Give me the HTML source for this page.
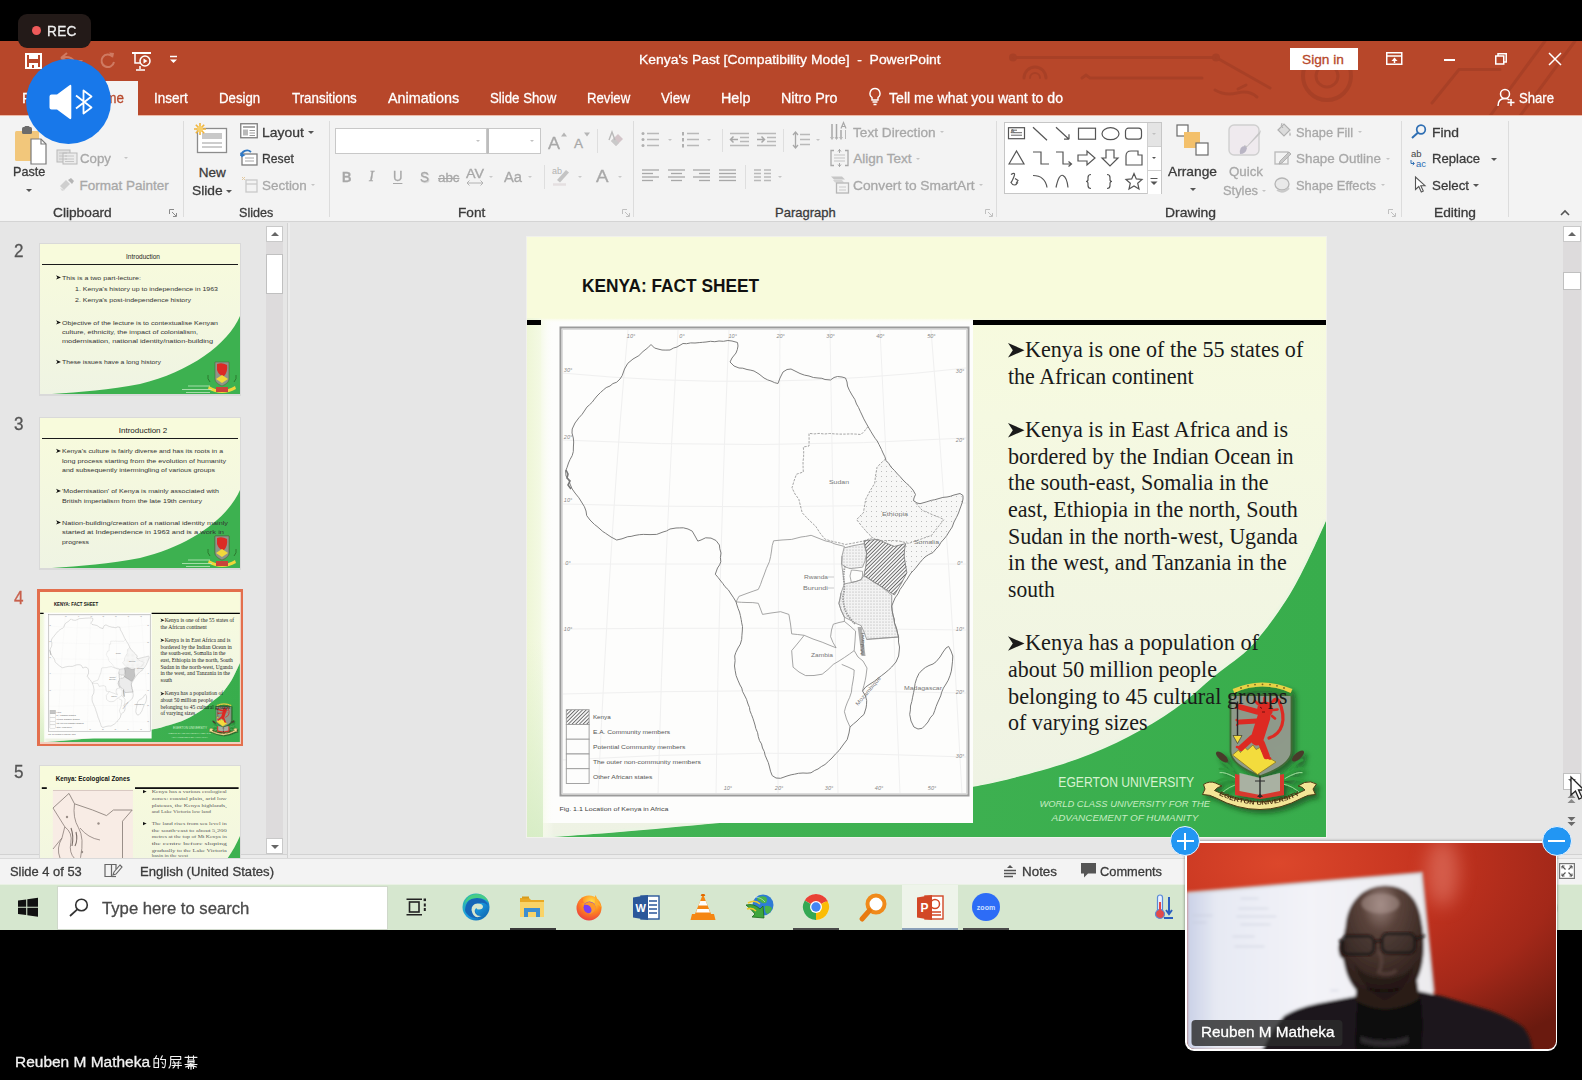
<!DOCTYPE html>
<html><head><meta charset="utf-8"><title>Kenya's Past - PowerPoint</title>
<style>
html,body{margin:0;padding:0;overflow:hidden;}
body{width:1582px;height:1080px;background:#000;position:relative;overflow:hidden;font-family:"Liberation Sans",sans-serif;}
.a{position:absolute;}
.t{position:absolute;white-space:pre;line-height:1;transform-origin:0 50%;-webkit-text-stroke:.3px currentColor;}
svg{position:absolute;overflow:visible;}
</style></head><body>
<div class="a" style="left:0px;top:41px;width:1582px;height:74px;background:#b7472a;"></div>
<div class="a" style="left:0px;top:115px;width:1582px;height:107px;background:#f3f3f3;border-bottom:1px solid #d4d4d4;box-sizing:border-box;"></div>
<div class="a" style="left:0px;top:115px;width:1582px;height:1px;background:#edb9a6;"></div>
<div class="a" style="left:62px;top:115px;width:76px;height:1px;background:#f3f3f3;"></div>
<div class="a" style="left:0px;top:222px;width:1582px;height:637px;background:#e6e6e6;"></div>
<div class="a" style="left:0px;top:854px;width:1582px;height:5px;background:#ebebeb;border-top:1px solid #d2d2d2;box-sizing:border-box;"></div>
<div class="a" style="left:0px;top:859px;width:1582px;height:25px;background:#f3f3f3;"></div>
<div class="a" style="left:0px;top:884px;width:1582px;height:46px;background:#d6e7cf;"></div>
<svg style="left:0;top:41px;overflow:hidden" width="1582" height="74" viewBox="0 41 1582 74"><g fill="none" stroke="#a53f26" stroke-width="3" opacity=".8" stroke-linecap="round"><path d="M1013 57.500H1216L1270 88"/><circle cx="1013" cy="57.500" r="2.500"/><circle cx="1216" cy="57.500" r="2.500"/><path d="M1082 78l4-3 4 3H1202"/><path d="M1024 78a11 11 0 0 1 22 0"/><path d="M1030 78a5 5 0 0 1 10 0" stroke-width="2"/><path d="M1215 90q10 6 22 3t20 4M1238 89l8-4"/><circle cx="1327" cy="76" r="24" stroke-width="4"/><circle cx="1327" cy="76" r="11"/><path d="M1432 103L1459 69.500H1500M1490 116L1545 41M1520 116L1575 41"/></g></svg>
<svg style="left:25px;top:53px" width="17" height="16" viewBox="0 0 17 16"><path d="M1 1h15v14H1z" fill="none" stroke="#fff" stroke-width="2"/><rect x="4" y="1" width="9" height="5" fill="#fff"/><rect x="4" y="10" width="9" height="5" fill="#fff"/><rect x="7" y="12" width="2" height="3" fill="#b7472a"/></svg>
<svg style="left:58px;top:52px" width="26" height="16" viewBox="0 0 26 16"><path d="M3 6 L9 1 M3 6 L10 9 M3 6 Q12 3 17 10" fill="none" stroke="#cf7a62" stroke-width="2"/><path d="M20 8h5l-2.500 3z" fill="#cf7a62"/></svg>
<svg style="left:99px;top:51px" width="18" height="18" viewBox="0 0 18 18"><path d="M13.500 5.500A6.300 6.300 0 1 0 15 11" fill="none" stroke="#cf7a62" stroke-width="2"/><path d="M10 1.500l5 .5-1 5z" fill="#cf7a62"/></svg>
<svg style="left:131px;top:52px" width="22" height="20" viewBox="0 0 22 20"><path d="M1 1h19" stroke="#fff" stroke-width="2"/><path d="M4 2v9h5" fill="none" stroke="#fff" stroke-width="1.500"/><circle cx="14" cy="9" r="5" fill="none" stroke="#fff" stroke-width="1.500"/><path d="M12.500 6.500l4 2.500-4 2.500z" fill="#fff"/><path d="M9 14v3M5 18h9" stroke="#fff" stroke-width="1.500"/></svg>
<svg style="left:169px;top:55px" width="9" height="9" viewBox="0 0 9 9"><path d="M1 1.500h7" stroke="#fff" stroke-width="1.500"/><path d="M1 4.500h7l-3.500 3.500z" fill="#fff"/></svg>
<span class="t" style="left:639.0px;top:52.8px;font-size:13.7px;color:#fff;font-family:'Liberation Sans',sans-serif;transform:scaleX(1.0158);">Kenya's Past [Compatibility Mode]  -  PowerPoint</span>
<div class="a" style="left:1290px;top:48px;width:68px;height:22px;background:#fff;"></div>
<span class="t" style="left:1302.0px;top:52.8px;font-size:13.7px;color:#b7472a;font-family:'Liberation Sans',sans-serif;">Sign in</span>
<svg style="left:1386px;top:52px" width="17" height="13" viewBox="0 0 17 13"><rect x=".75" y=".75" width="15" height="11.500" fill="none" stroke="#fff" stroke-width="1.500"/><path d="M1 4h15" stroke="#fff" stroke-width="1.500"/><path d="M8.500 5.500l3 3.500h-6z" fill="#fff"/><path d="M8.500 8v3" stroke="#fff" stroke-width="1.500"/></svg>
<div class="a" style="left:1444px;top:59px;width:11px;height:1.5px;background:#fff;"></div>
<svg style="left:1495px;top:53px" width="12" height="12" viewBox="0 0 12 12"><rect x=".75" y="3" width="8" height="8" fill="none" stroke="#fff" stroke-width="1.500"/><path d="M3 3V.75h8.250V9H9" fill="none" stroke="#fff" stroke-width="1.500"/></svg>
<svg style="left:1548px;top:52px" width="14" height="14" viewBox="0 0 14 14"><path d="M1 1l12 12M13 1L1 13" stroke="#fff" stroke-width="1.500"/></svg>
<span class="t" style="left:22.0px;top:90.2px;font-size:15px;color:#fff;font-family:'Liberation Sans',sans-serif;transform:scaleX(0.9929);">File</span>
<div class="a" style="left:62px;top:81px;width:76px;height:34px;background:#f3f3f3;"></div>
<span class="t" style="left:88.0px;top:90.2px;font-size:15px;color:#b7472a;font-family:'Liberation Sans',sans-serif;transform:scaleX(0.8997);">Home</span>
<span class="t" style="left:153.7px;top:90.2px;font-size:15px;color:#fff;font-family:'Liberation Sans',sans-serif;transform:scaleX(0.9010);">Insert</span>
<span class="t" style="left:219.4px;top:90.2px;font-size:15px;color:#fff;font-family:'Liberation Sans',sans-serif;transform:scaleX(0.8802);">Design</span>
<span class="t" style="left:292.1px;top:90.2px;font-size:15px;color:#fff;font-family:'Liberation Sans',sans-serif;transform:scaleX(0.8900);">Transitions</span>
<span class="t" style="left:387.6px;top:90.2px;font-size:15px;color:#fff;font-family:'Liberation Sans',sans-serif;transform:scaleX(0.9582);">Animations</span>
<span class="t" style="left:489.7px;top:90.2px;font-size:15px;color:#fff;font-family:'Liberation Sans',sans-serif;transform:scaleX(0.8834);">Slide Show</span>
<span class="t" style="left:587.3px;top:90.2px;font-size:15px;color:#fff;font-family:'Liberation Sans',sans-serif;transform:scaleX(0.8783);">Review</span>
<span class="t" style="left:661.0px;top:90.2px;font-size:15px;color:#fff;font-family:'Liberation Sans',sans-serif;transform:scaleX(0.8994);">View</span>
<span class="t" style="left:721.0px;top:90.2px;font-size:15px;color:#fff;font-family:'Liberation Sans',sans-serif;transform:scaleX(0.9562);">Help</span>
<span class="t" style="left:781.0px;top:90.2px;font-size:15px;color:#fff;font-family:'Liberation Sans',sans-serif;transform:scaleX(0.9547);">Nitro Pro</span>
<svg style="left:868px;top:87px" width="14" height="20" viewBox="0 0 14 20"><path d="M7 1.500a5 5 0 0 1 3 9v2.500h-6v-2.500a5 5 0 0 1 3-9z" fill="none" stroke="#fff" stroke-width="1.400"/><path d="M4.500 15h5M5.500 17.500h3" stroke="#fff" stroke-width="1.400"/></svg>
<span class="t" style="left:889.0px;top:90.2px;font-size:15px;color:#fff;font-family:'Liberation Sans',sans-serif;transform:scaleX(0.9400);">Tell me what you want to do</span>
<svg style="left:1497px;top:88px" width="19" height="19" viewBox="0 0 19 19"><circle cx="8" cy="6" r="4.500" fill="none" stroke="#fff" stroke-width="1.500"/><path d="M1 18c0-5 3-7.500 7-7.500 2 0 3.500.7 4.500 1.500" fill="none" stroke="#fff" stroke-width="1.500"/><path d="M14 11v7M10.500 14.500h7" stroke="#fff" stroke-width="1.500"/></svg>
<span class="t" style="left:1519.0px;top:90.2px;font-size:15px;color:#fff;font-family:'Liberation Sans',sans-serif;transform:scaleX(0.8744);">Share</span>
<svg style="left:14px;top:126px" width="34" height="40" viewBox="0 0 34 40"><rect x="1" y="5" width="24" height="30" rx="1.500" fill="#f2c77b"/><rect x="8" y="1" width="10" height="7" rx="1.500" fill="#6b6b6b"/><rect x="10.500" y="0" width="5" height="3" rx="1" fill="#6b6b6b"/><path d="M17 13h10l5 5v20H17z" fill="#fff" stroke="#7a7a7a" stroke-width="1.200"/><path d="M27 13v5h5" fill="none" stroke="#7a7a7a" stroke-width="1.200"/></svg>
<span class="t" style="left:13.3px;top:165.4px;font-size:13.5px;color:#3b3b3b;font-family:'Liberation Sans',sans-serif;transform:scaleX(0.9356);">Paste</span>
<div class="a" style="left:25.5px;top:189px;border-left:3px solid transparent;border-right:3px solid transparent;border-top:3px solid #555;"></div>
<svg style="left:56px;top:149px" width="24" height="16" viewBox="0 0 24 16"><rect x="1" y="1" width="13" height="12" fill="#e2e2e2" stroke="#b9b9b9"/><rect x="7" y="4" width="14" height="11" fill="#ececec" stroke="#b9b9b9"/><path d="M3 4h8M3 7h8M3 10h8M9 7h9M9 10h9M9 12.500h9" stroke="#bdbdbd" stroke-width=".8"/></svg>
<span class="t" style="left:80.0px;top:152.4px;font-size:13.5px;color:#a8a8a8;font-family:'Liberation Sans',sans-serif;transform:scaleX(0.9836);">Copy</span>
<div class="a" style="left:123.5px;top:157px;border-left:2.5px solid transparent;border-right:2.5px solid transparent;border-top:2.5px solid #c4c4c4;"></div>
<svg style="left:58px;top:177px" width="18" height="16" viewBox="0 0 18 16"><path d="M2 9l6-6 4 4-6 6z" fill="#cfcfcf"/><path d="M10 3l3-2 3 3-2 3z" fill="#b5b5b5"/><path d="M2 11l2 3 3-1" fill="#d9d9d9"/></svg>
<span class="t" style="left:79.5px;top:178.9px;font-size:13.5px;color:#a8a8a8;font-family:'Liberation Sans',sans-serif;">Format Painter</span>
<span class="t" style="left:52.6px;top:206.1px;font-size:13px;color:#3b3b3b;font-family:'Liberation Sans',sans-serif;transform:scaleX(1.0549);">Clipboard</span>
<svg style="left:169px;top:209px" width="8" height="8" viewBox="0 0 8 8"><path d="M.5 5V.5H5" fill="none" stroke="#8a8a8a" stroke-width="1"/><path d="M3 3l4 4M7.500 4v3.500H4" fill="none" stroke="#8a8a8a" stroke-width="1"/></svg>
<div class="a" style="left:183px;top:121px;width:1px;height:96px;background:#dcdcdc;"></div>
<svg style="left:193px;top:122px" width="36" height="34" viewBox="0 0 36 34"><rect x="4.500" y="6.500" width="29" height="24" fill="#fff" stroke="#8c8c8c" stroke-width="1.300"/><rect x="9" y="11" width="20" height="6" fill="#c9c9c9"/><path d="M9 21h20M9 25h20" stroke="#bdbdbd" stroke-width="1.300"/><g stroke="#f0b43c" stroke-width="1.600"><path d="M7 1v12M1 7h12M2.800 2.800l8.400 8.400M11.200 2.800l-8.400 8.400"/></g><circle cx="7" cy="7" r="3" fill="#f7cf6b"/></svg>
<span class="t" style="left:198.8px;top:165.9px;font-size:13.5px;color:#3b3b3b;font-family:'Liberation Sans',sans-serif;">New</span>
<span class="t" style="left:192.3px;top:183.9px;font-size:13.5px;color:#3b3b3b;font-family:'Liberation Sans',sans-serif;transform:scaleX(1.0226);">Slide</span>
<div class="a" style="left:225.5px;top:190px;border-left:3px solid transparent;border-right:3px solid transparent;border-top:3px solid #555;"></div>
<svg style="left:240px;top:123px" width="18" height="16" viewBox="0 0 18 16"><rect x=".75" y=".75" width="16.500" height="14" fill="#fff" stroke="#7d7d7d" stroke-width="1.300"/><path d="M3 4h12" stroke="#8d8d8d" stroke-width="1.500"/><rect x="3" y="6.500" width="5" height="6" fill="#b9b9b9"/><path d="M9.500 7.500h5.500M9.500 10h5.500M9.500 12.500h5.500" stroke="#9a9a9a" stroke-width="1"/></svg>
<span class="t" style="left:262.2px;top:125.9px;font-size:13.5px;color:#3b3b3b;font-family:'Liberation Sans',sans-serif;transform:scaleX(1.0312);">Layout</span>
<div class="a" style="left:307.5px;top:131px;border-left:3px solid transparent;border-right:3px solid transparent;border-top:3px solid #555;"></div>
<svg style="left:240px;top:149px" width="18" height="17" viewBox="0 0 18 17"><rect x="2" y="5" width="15" height="11" fill="#fff" stroke="#7d7d7d" stroke-width="1.300"/><path d="M5 9h9M5 12h9" stroke="#a5a5a5" stroke-width="1"/><path d="M1 7 A6 6 0 0 1 11 3" fill="none" stroke="#2f78c4" stroke-width="1.800"/><path d="M0 3.500l1.500 5 4-2.500z" fill="#2f78c4"/></svg>
<span class="t" style="left:262.2px;top:152.4px;font-size:13.5px;color:#3b3b3b;font-family:'Liberation Sans',sans-serif;transform:scaleX(0.9017);">Reset</span>
<svg style="left:241px;top:176px" width="18" height="17" viewBox="0 0 18 17"><rect x="5" y="4" width="11" height="12" fill="none" stroke="#c9c9c9" stroke-width="1.300"/><path d="M5 8h11" stroke="#c9c9c9" stroke-width="1.300"/><path d="M1 1l3 3M1 4l3-3" stroke="#e2c9a0" stroke-width="1"/></svg>
<span class="t" style="left:262.2px;top:178.9px;font-size:13.5px;color:#a8a8a8;font-family:'Liberation Sans',sans-serif;transform:scaleX(0.9949);">Section</span>
<div class="a" style="left:310.5px;top:184px;border-left:2.5px solid transparent;border-right:2.5px solid transparent;border-top:2.5px solid #c4c4c4;"></div>
<span class="t" style="left:238.8px;top:206.1px;font-size:13px;color:#3b3b3b;font-family:'Liberation Sans',sans-serif;transform:scaleX(0.9659);">Slides</span>
<div class="a" style="left:329px;top:121px;width:1px;height:96px;background:#dcdcdc;"></div>
<div class="a" style="left:335px;top:128px;width:152px;height:26px;background:#fff;border:1px solid #c8c8c8;box-sizing:border-box;"></div>
<div class="a" style="left:487px;top:128px;width:54px;height:26px;background:#fff;border:1px solid #c8c8c8;box-sizing:border-box;border-left:2px solid #bdbdbd;"></div>
<div class="a" style="left:476.0px;top:140px;border-left:2.5px solid transparent;border-right:2.5px solid transparent;border-top:2.5px solid #c2c2c2;"></div>
<div class="a" style="left:529.5px;top:140px;border-left:2.5px solid transparent;border-right:2.5px solid transparent;border-top:2.5px solid #c2c2c2;"></div>
<span class="t" style="left:548.0px;top:134.7px;font-size:17px;color:#a8a8a8;font-family:'Liberation Sans',sans-serif;transform:scaleX(1.0582);">A</span>
<svg style="left:561px;top:132px" width="6" height="5" viewBox="0 0 6 5"><path d="M0 4.500l3-4 3 4z" fill="#b5b5b5"/></svg>
<span class="t" style="left:574.0px;top:137.4px;font-size:13.5px;color:#a8a8a8;font-family:'Liberation Sans',sans-serif;">A</span>
<svg style="left:584px;top:132px" width="6" height="5" viewBox="0 0 6 5"><path d="M0 .5l3 4 3-4z" fill="#b5b5b5"/></svg>
<div class="a" style="left:597px;top:129px;width:1px;height:24px;background:#dedede;"></div>
<svg style="left:607px;top:131px" width="18" height="20" viewBox="0 0 18 20"><path d="M4 10l7-7 5 5-7 7z" fill="#d3c5c9"/><path d="M4 10l3-3 5 5-3 3z" fill="#c9c9c9"/><path d="M2 9l3-8 3 8" fill="none" stroke="#b9b9b9" stroke-width="1.400"/></svg>
<span class="t" style="left:341.5px;top:169.7px;font-size:14px;color:#a8a8a8;font-family:'Liberation Sans',sans-serif;font-weight:bold;transform:scaleX(0.9396);">B</span>
<span class="t" style="left:369.0px;top:169.8px;font-size:14px;color:#a8a8a8;font-family:'Liberation Serif',serif;font-style:italic;transform:scaleX(1.0724);">I</span>
<span class="t" style="left:392.5px;top:169.2px;font-size:14px;color:#a8a8a8;font-family:'Liberation Sans',sans-serif;transform:scaleX(0.9396);border-bottom:1px solid #a8a8a8;padding-bottom:0px;">U</span>
<span class="t" style="left:419.5px;top:169.2px;font-size:15px;color:#a8a8a8;font-family:'Liberation Sans',sans-serif;transform:scaleX(0.8995);text-shadow:1px 1px 1px #cfcfcf;">S</span>
<span class="t" style="left:438.0px;top:171.6px;font-size:12px;color:#a8a8a8;font-family:'Liberation Sans',sans-serif;transform:scaleX(1.1112);text-decoration:line-through;">abc</span>
<span class="t" style="left:466.0px;top:168.1px;font-size:12px;color:#a8a8a8;font-family:'Liberation Sans',sans-serif;transform:scaleX(1.1906);">AV</span>
<svg style="left:466px;top:180px" width="18" height="6" viewBox="0 0 18 6"><path d="M1 3h16M3.500 .5L1 3l2.500 2.500M14.500 .5L17 3l-2.500 2.500" fill="none" stroke="#b2b2b2" stroke-width="1"/></svg>
<div class="a" style="left:489.0px;top:176px;border-left:2.5px solid transparent;border-right:2.5px solid transparent;border-top:2.5px solid #c9c9c9;"></div>
<span class="t" style="left:504.0px;top:169.7px;font-size:14px;color:#a8a8a8;font-family:'Liberation Sans',sans-serif;transform:scaleX(1.0511);">Aa</span>
<div class="a" style="left:527.5px;top:176px;border-left:2.5px solid transparent;border-right:2.5px solid transparent;border-top:2.5px solid #c9c9c9;"></div>
<div class="a" style="left:544px;top:165px;width:1px;height:24px;background:#dedede;"></div>
<svg style="left:552px;top:166px" width="20" height="20" viewBox="0 0 20 20"><text x="0" y="8" font-size="9" fill="#b2b2b2" font-family="Liberation Sans">ab</text><path d="M5 14l9-10 3 2.500-9 10z" fill="#c4c4c4"/><path d="M1 18.500h13" stroke="#e4dfe0" stroke-width="2.500"/></svg>
<div class="a" style="left:578.0px;top:176px;border-left:2.5px solid transparent;border-right:2.5px solid transparent;border-top:2.5px solid #c9c9c9;"></div>
<span class="t" style="left:595.5px;top:168.2px;font-size:17px;color:#a8a8a8;font-family:'Liberation Sans',sans-serif;transform:scaleX(1.1023);">A</span>
<div class="a" style="left:617.5px;top:176px;border-left:2.5px solid transparent;border-right:2.5px solid transparent;border-top:2.5px solid #c9c9c9;"></div>
<span class="t" style="left:457.8px;top:206.1px;font-size:13px;color:#3b3b3b;font-family:'Liberation Sans',sans-serif;transform:scaleX(1.0495);">Font</span>
<svg style="left:621.5px;top:209px" width="8" height="8" viewBox="0 0 8 8"><path d="M.5 5V.5H5" fill="none" stroke="#c0c0c0" stroke-width="1"/><path d="M3 3l4 4M7.500 4v3.500H4" fill="none" stroke="#c0c0c0" stroke-width="1"/></svg>
<div class="a" style="left:633px;top:121px;width:1px;height:96px;background:#dcdcdc;"></div>
<svg style="left:641px;top:131px" width="19" height="17" viewBox="0 0 19 17"><g fill="#b0b0b0"><circle cx="2" cy="2.500" r="1.500"/><circle cx="2" cy="8.500" r="1.500"/><circle cx="2" cy="14.500" r="1.500"/></g><path d="M6 2.500h12M6 8.500h12M6 14.500h12" stroke="#b9b9b9" stroke-width="1.300"/></svg>
<div class="a" style="left:667.5px;top:139px;border-left:2.5px solid transparent;border-right:2.5px solid transparent;border-top:2.5px solid #c4c4c4;"></div>
<svg style="left:681px;top:131px" width="19" height="17" viewBox="0 0 19 17"><g fill="#b0b0b0"><rect x="1" y="1" width="2" height="3.500"/><rect x="1" y="7" width="2" height="3.500"/><rect x="1" y="13" width="2" height="3.500"/></g><path d="M6 2.500h12M6 8.500h12M6 14.500h12" stroke="#b9b9b9" stroke-width="1.300"/></svg>
<div class="a" style="left:707.0px;top:139px;border-left:2.5px solid transparent;border-right:2.5px solid transparent;border-top:2.5px solid #c4c4c4;"></div>
<div class="a" style="left:722px;top:129px;width:1px;height:23px;background:#dedede;"></div>
<svg style="left:729px;top:132px" width="21" height="16" viewBox="0 0 21 16"><path d="M1 1.500h19M11 5.500h9M11 9.500h9M1 13.500h19" stroke="#b9b9b9" stroke-width="1.300"/><path d="M9 7.500H2M4.500 4.500l-3 3 3 3" fill="none" stroke="#a8a8a8" stroke-width="1.500"/></svg>
<svg style="left:756px;top:132px" width="21" height="16" viewBox="0 0 21 16"><path d="M1 1.500h19M11 5.500h9M11 9.500h9M1 13.500h19" stroke="#b9b9b9" stroke-width="1.300"/><path d="M1 7.500h7M5.500 4.500l3 3-3 3" fill="none" stroke="#a8a8a8" stroke-width="1.500"/></svg>
<div class="a" style="left:783px;top:129px;width:1px;height:23px;background:#dedede;"></div>
<svg style="left:792px;top:131px" width="19" height="19" viewBox="0 0 19 19"><path d="M8 3.500h10M8 8.500h10M8 13.500h10" stroke="#b9b9b9" stroke-width="1.300"/><path d="M3.500 1v16M1 4l2.500-3 2.500 3M1 14l2.500 3 2.500-3" fill="none" stroke="#a8a8a8" stroke-width="1.300"/></svg>
<div class="a" style="left:816.0px;top:139px;border-left:2.5px solid transparent;border-right:2.5px solid transparent;border-top:2.5px solid #c4c4c4;"></div>
<svg style="left:642px;top:169px" width="17" height="16.0" viewBox="0 0 17 16.0"><path d="M0 1.0h17" stroke="#a8a8a8" stroke-width="1.300"/><path d="M0 4.5h11" stroke="#a8a8a8" stroke-width="1.300"/><path d="M0 8.0h17" stroke="#a8a8a8" stroke-width="1.300"/><path d="M0 11.5h11" stroke="#a8a8a8" stroke-width="1.300"/></svg>
<svg style="left:667.5px;top:169px" width="17" height="16.0" viewBox="0 0 17 16.0"><path d="M0 1.0h17" stroke="#a8a8a8" stroke-width="1.300"/><path d="M3 4.5h11" stroke="#a8a8a8" stroke-width="1.300"/><path d="M0 8.0h17" stroke="#a8a8a8" stroke-width="1.300"/><path d="M3 11.5h11" stroke="#a8a8a8" stroke-width="1.300"/></svg>
<svg style="left:693px;top:169px" width="17" height="16.0" viewBox="0 0 17 16.0"><path d="M0 1.0h17" stroke="#a8a8a8" stroke-width="1.300"/><path d="M6 4.5h11" stroke="#a8a8a8" stroke-width="1.300"/><path d="M0 8.0h17" stroke="#a8a8a8" stroke-width="1.300"/><path d="M6 11.5h11" stroke="#a8a8a8" stroke-width="1.300"/></svg>
<svg style="left:718.5px;top:169px" width="17" height="16.0" viewBox="0 0 17 16.0"><path d="M0 1.0h17" stroke="#a8a8a8" stroke-width="1.300"/><path d="M0 4.5h17" stroke="#a8a8a8" stroke-width="1.300"/><path d="M0 8.0h17" stroke="#a8a8a8" stroke-width="1.300"/><path d="M0 11.5h17" stroke="#a8a8a8" stroke-width="1.300"/></svg>
<div class="a" style="left:745px;top:165px;width:1px;height:24px;background:#dedede;"></div>
<svg style="left:754px;top:169px" width="18" height="15" viewBox="0 0 18 15"><path d="M0 1h7M0 4.500h7M0 8h7M0 11.500h7M10 1h7M10 4.500h7M10 8h7M10 11.500h7" stroke="#b9b9b9" stroke-width="1.300"/></svg>
<div class="a" style="left:777.5px;top:176px;border-left:2.5px solid transparent;border-right:2.5px solid transparent;border-top:2.5px solid #c4c4c4;"></div>
<svg style="left:830px;top:122px" width="19" height="20" viewBox="0 0 19 20"><path d="M2 2v15M6.500 2v15M11 8v9" stroke="#a8a8a8" stroke-width="1.500"/><path d="M11 6.500l2.500-6 2.500 6M12 4.500h3" fill="none" stroke="#a8a8a8" stroke-width="1.200"/><path d="M.5 15l1.500 2.500 1.500-2.500M5 15l1.500 2.500 1.500-2.500M9.500 15l1.500 2.500 1.500-2.500M15.500 8v9" fill="none" stroke="#b9b9b9" stroke-width="1"/></svg>
<span class="t" style="left:853.3px;top:125.9px;font-size:13.5px;color:#a8a8a8;font-family:'Liberation Sans',sans-serif;transform:scaleX(1.0100);">Text Direction</span>
<div class="a" style="left:939.5px;top:131px;border-left:2.5px solid transparent;border-right:2.5px solid transparent;border-top:2.5px solid #c4c4c4;"></div>
<svg style="left:830px;top:149px" width="19" height="18" viewBox="0 0 19 18"><path d="M4 1.500H1v15h3M15 1.500h3v15h-3" fill="none" stroke="#a8a8a8" stroke-width="1.300"/><path d="M4 6h11M4 9h11M4 12h11" stroke="#c4c4c4" stroke-width="1.200"/><path d="M9.500 0v4M8 2.500l1.500-2 1.500 2M9.500 18v-4M8 15.500l1.500 2 1.500-2" fill="none" stroke="#a8a8a8" stroke-width="1"/></svg>
<span class="t" style="left:853.3px;top:152.4px;font-size:13.5px;color:#a8a8a8;font-family:'Liberation Sans',sans-serif;">Align Text</span>
<div class="a" style="left:916.0px;top:157.5px;border-left:2.5px solid transparent;border-right:2.5px solid transparent;border-top:2.5px solid #c4c4c4;"></div>
<svg style="left:830px;top:175px" width="20" height="19" viewBox="0 0 20 19"><path d="M1 1.500h11l3 3H4z" fill="#c6c6c6"/><path d="M3 5h9l2 2.500H5z" fill="#d3d3d3"/><rect x="6.500" y="8" width="12" height="10" fill="#f3f3f3" stroke="#b5b5b5" stroke-width="1.300"/><path d="M9 12h7M9 15h7" stroke="#c9c9c9"/></svg>
<span class="t" style="left:853.3px;top:178.9px;font-size:13.5px;color:#a8a8a8;font-family:'Liberation Sans',sans-serif;transform:scaleX(1.0202);">Convert to SmartArt</span>
<div class="a" style="left:979.0px;top:184px;border-left:2.5px solid transparent;border-right:2.5px solid transparent;border-top:2.5px solid #c4c4c4;"></div>
<span class="t" style="left:775.0px;top:206.1px;font-size:13px;color:#3b3b3b;font-family:'Liberation Sans',sans-serif;">Paragraph</span>
<svg style="left:984.5px;top:209px" width="8" height="8" viewBox="0 0 8 8"><path d="M.5 5V.5H5" fill="none" stroke="#c0c0c0" stroke-width="1"/><path d="M3 3l4 4M7.500 4v3.500H4" fill="none" stroke="#c0c0c0" stroke-width="1"/></svg>
<div class="a" style="left:996px;top:121px;width:1px;height:96px;background:#dcdcdc;"></div>
<div class="a" style="left:1004px;top:122px;width:158px;height:72px;background:#fff;border:1px solid #c6c6c6;box-sizing:border-box;"></div>
<div class="a" style="left:1147px;top:123px;width:13px;height:23px;background:#e4e4e4;border-left:1px solid #d0d0d0;"></div>
<div class="a" style="left:1147px;top:146px;width:13px;height:24px;background:#fff;border-left:1px solid #d0d0d0;border-top:1px solid #d0d0d0;"></div>
<div class="a" style="left:1147px;top:170px;width:13px;height:23px;background:#fff;border-left:1px solid #d0d0d0;border-top:1px solid #d0d0d0;"></div>
<div class="a" style="left:1152px;top:133px;border-left:2px solid transparent;border-right:2px solid transparent;border-top:2px solid #c0c0c0;"></div>
<div class="a" style="left:1151.5px;top:157px;border-left:2.5px solid transparent;border-right:2.5px solid transparent;border-top:2.5px solid #555;"></div>
<svg style="left:1150px;top:177px" width="8" height="9" viewBox="0 0 8 9"><path d="M.5 1.500h7" stroke="#555"/><path d="M.5 4.500h7L4 8z" fill="#555"/></svg>
<svg style="left:1006px;top:123px" width="140" height="70" viewBox="0 0 140 70"><g fill="none" stroke="#555" stroke-width="1.200">
<g transform="translate(0,1.200)"><rect x="2.500" y="3.500" width="16" height="11"/><path d="M5 6h6M5 8.500h11M5 11h11" stroke-width=".9"/><text x="4.500" y="9" font-size="6" fill="#555" stroke="none" font-family="Liberation Sans">A</text>
<path d="M27 3l14 13"/>
<path d="M50 3l13 12M63 15v-5M63 15h-5"/>
<rect x="72.500" y="4" width="17" height="11"/>
<ellipse cx="104.500" cy="9.500" rx="8.500" ry="6"/>
<rect x="119.500" y="4" width="16" height="11" rx="3"/></g>
<path d="M3 41l7.500-13 7.500 13z"/>
<path d="M27 29h8v12h8"/>
<path d="M50 29h7v12h8M62.500 38.500l3 2.500-3 2.500"/>
<path d="M72 32h9v-4l8 7-8 7v-4h-9z"/>
<path d="M100 27h8v8h4l-8 8-8-8h4z"/>
<path d="M120 42v-9q0-5 5-5h7v4h4v10z"/>
<g transform="translate(0,-2.500)"><path d="M5 54q5-3 3 2t-3 6q3 5 7 0M9 58l3 2-2 3"/>
<path d="M27 55q12 0 14 12"/>
<path d="M50 67q3-14 7-12t5 12"/>
<path d="M85 54q-3 0-3 3v2q0 2-2 2 2 0 2 2v2q0 3 3 3"/>
<path d="M101 54q3 0 3 3v2q0 2 2 2-2 0-2 2v2q0 3-3 3"/>
<path d="M128 53l2.300 5.400 5.700.5-4.300 3.800 1.300 5.800-5-3-5 3 1.300-5.800-4.300-3.800 5.700-.5z"/></g>
</g></svg>
<svg style="left:1176px;top:124px" width="33" height="32" viewBox="0 0 33 32"><rect x="1" y="1" width="11" height="11" fill="#fff" stroke="#6b6b6b" stroke-width="1.200"/><rect x="8" y="8" width="16" height="16" fill="#f3c06b"/><rect x="20" y="19" width="12" height="12" fill="#fff" stroke="#6b6b6b" stroke-width="1.200"/></svg>
<span class="t" style="left:1168.0px;top:165.4px;font-size:13.5px;color:#3b3b3b;font-family:'Liberation Sans',sans-serif;transform:scaleX(1.0202);">Arrange</span>
<div class="a" style="left:1190px;top:188px;border-left:3px solid transparent;border-right:3px solid transparent;border-top:3px solid #555;"></div>
<svg style="left:1228px;top:124px" width="36" height="36" viewBox="0 0 36 36"><rect x="1" y="1" width="30" height="30" rx="5" fill="#efeaee" stroke="#cfcfcf" stroke-width="1.400"/><path d="M33 6L19 22l-3-1 1 4 15-15z" fill="#c6c6c6"/><path d="M17 22q-6 0-5 8 6 0 7-6z" fill="#b9b5c4"/></svg>
<span class="t" style="left:1229.0px;top:165.4px;font-size:13.5px;color:#a8a8a8;font-family:'Liberation Sans',sans-serif;transform:scaleX(0.9853);">Quick</span>
<span class="t" style="left:1223.0px;top:183.9px;font-size:13.5px;color:#a8a8a8;font-family:'Liberation Sans',sans-serif;transform:scaleX(0.9520);">Styles</span>
<div class="a" style="left:1261.5px;top:190px;border-left:2.5px solid transparent;border-right:2.5px solid transparent;border-top:2.5px solid #c4c4c4;"></div>
<svg style="left:1274px;top:122px" width="19" height="18" viewBox="0 0 19 18"><path d="M4 8l6-6 6 6-6 6z" fill="#dcdcdc" stroke="#b0b0b0" stroke-width="1.200"/><path d="M8 1q-2 3 1 5" fill="none" stroke="#b0b0b0"/><path d="M16 10q2 3 0 4-2-1 0-4z" fill="#c4c4c4"/></svg>
<span class="t" style="left:1296.0px;top:125.9px;font-size:13.5px;color:#a8a8a8;font-family:'Liberation Sans',sans-serif;transform:scaleX(0.9495);">Shape Fill</span>
<div class="a" style="left:1357.5px;top:131px;border-left:2.5px solid transparent;border-right:2.5px solid transparent;border-top:2.5px solid #c4c4c4;"></div>
<svg style="left:1274px;top:150px" width="19" height="16" viewBox="0 0 19 16"><rect x="1" y="2" width="13" height="12" fill="none" stroke="#b9b9b9" stroke-width="1.300"/><path d="M6 11l9-9 2 2-9 9-3 1z" fill="#c9c9c9" stroke="#a8a8a8" stroke-width=".8"/></svg>
<span class="t" style="left:1296.0px;top:152.4px;font-size:13.5px;color:#a8a8a8;font-family:'Liberation Sans',sans-serif;transform:scaleX(0.9934);">Shape Outline</span>
<div class="a" style="left:1385.5px;top:157.5px;border-left:2.5px solid transparent;border-right:2.5px solid transparent;border-top:2.5px solid #c4c4c4;"></div>
<svg style="left:1274px;top:177px" width="19" height="16" viewBox="0 0 19 16"><ellipse cx="8" cy="7" rx="7" ry="6" fill="#e9e9e9" stroke="#b5b5b5" stroke-width="1.300"/><path d="M3 13q6 4 12-2" fill="none" stroke="#c9c9c9" stroke-width="2"/></svg>
<span class="t" style="left:1296.0px;top:178.9px;font-size:13.5px;color:#a8a8a8;font-family:'Liberation Sans',sans-serif;transform:scaleX(0.9545);">Shape Effects</span>
<div class="a" style="left:1380.5px;top:184px;border-left:2.5px solid transparent;border-right:2.5px solid transparent;border-top:2.5px solid #c4c4c4;"></div>
<span class="t" style="left:1165.0px;top:206.1px;font-size:13px;color:#3b3b3b;font-family:'Liberation Sans',sans-serif;transform:scaleX(1.0695);">Drawing</span>
<svg style="left:1388px;top:209px" width="8" height="8" viewBox="0 0 8 8"><path d="M.5 5V.5H5" fill="none" stroke="#c0c0c0" stroke-width="1"/><path d="M3 3l4 4M7.500 4v3.500H4" fill="none" stroke="#c0c0c0" stroke-width="1"/></svg>
<div class="a" style="left:1401px;top:121px;width:1px;height:96px;background:#dcdcdc;"></div>
<svg style="left:1411px;top:124px" width="16" height="15" viewBox="0 0 16 15"><circle cx="10" cy="5.500" r="4.300" fill="none" stroke="#2f6fb3" stroke-width="1.700"/><path d="M6.800 8.800L1 14" stroke="#2f6fb3" stroke-width="2"/></svg>
<span class="t" style="left:1432.0px;top:125.9px;font-size:13.5px;color:#3b3b3b;font-family:'Liberation Sans',sans-serif;transform:scaleX(1.0281);">Find</span>
<svg style="left:1410px;top:149px" width="20" height="19" viewBox="0 0 20 19"><text x="1" y="8" font-size="9.500" fill="#444" font-family="Liberation Sans">ab</text><text x="6" y="17.500" font-size="9.500" fill="#2f6fb3" font-family="Liberation Sans">ac</text><path d="M1 11v3.500h3M2.800 12.800l1.500 1.700-1.500 1.700" fill="none" stroke="#2f6fb3" stroke-width="1"/></svg>
<span class="t" style="left:1432.0px;top:152.4px;font-size:13.5px;color:#3b3b3b;font-family:'Liberation Sans',sans-serif;transform:scaleX(0.9691);">Replace</span>
<div class="a" style="left:1491px;top:157.5px;border-left:3px solid transparent;border-right:3px solid transparent;border-top:3px solid #555;"></div>
<svg style="left:1414px;top:176px" width="12" height="17" viewBox="0 0 12 17"><path d="M1.500 1v12.500l3.300-3 2.500 5.500 2-1-2.500-5.300H11z" fill="#fff" stroke="#555" stroke-width="1.100"/></svg>
<span class="t" style="left:1432.0px;top:178.9px;font-size:13.5px;color:#3b3b3b;font-family:'Liberation Sans',sans-serif;transform:scaleX(0.9861);">Select</span>
<div class="a" style="left:1472.5px;top:184px;border-left:3px solid transparent;border-right:3px solid transparent;border-top:3px solid #555;"></div>
<span class="t" style="left:1434.0px;top:206.1px;font-size:13px;color:#3b3b3b;font-family:'Liberation Sans',sans-serif;transform:scaleX(1.0566);">Editing</span>
<div class="a" style="left:1508px;top:121px;width:1px;height:96px;background:#dcdcdc;"></div>
<svg style="left:1560px;top:209px" width="10" height="7" viewBox="0 0 10 7"><path d="M1 6l4-4 4 4" fill="none" stroke="#555" stroke-width="1.600"/></svg>
<svg width="0" height="0" style="left:0;top:0"><defs><linearGradient id="tbg" x1="0" y1="0" x2="0" y2="1"><stop offset="0" stop-color="#f8fbdc"/><stop offset="1" stop-color="#eff4e3"/></linearGradient></defs></svg>
<div class="a" style="left:266px;top:242px;width:17px;height:596px;background:#dddbdc;"></div>
<div class="a" style="left:266px;top:226px;width:17px;height:16px;background:#fff;border:1px solid #c9c9c9;box-sizing:border-box;"></div>
<div class="a" style="left:270.500px;top:231.500px;border-left:4px solid transparent;border-right:4px solid transparent;border-bottom:4px solid #666;"></div>
<div class="a" style="left:266px;top:254px;width:17px;height:40px;background:#fff;border:1px solid #c0c0c0;box-sizing:border-box;"></div>
<div class="a" style="left:266px;top:838px;width:17px;height:16px;background:#fff;border:1px solid #c9c9c9;box-sizing:border-box;"></div>
<div class="a" style="left:270.500px;top:844.500px;border-left:4px solid transparent;border-right:4px solid transparent;border-top:4px solid #666;"></div>
<div class="a" style="left:287px;top:223px;width:1px;height:635px;background:#d2d2d2;"></div>
<div class="a" style="left:288px;top:223px;width:2px;height:635px;background:#ececec;"></div>
<span class="t" style="left:13.5px;top:241.7px;font-size:18px;color:#555;font-family:'Liberation Sans',sans-serif;transform:scaleX(0.9489);">2</span>
<span class="t" style="left:13.5px;top:415.2px;font-size:18px;color:#555;font-family:'Liberation Sans',sans-serif;transform:scaleX(0.9489);">3</span>
<span class="t" style="left:13.5px;top:589.2px;font-size:18px;color:#c8604c;font-family:'Liberation Sans',sans-serif;transform:scaleX(0.9489);">4</span>
<span class="t" style="left:13.5px;top:762.7px;font-size:18px;color:#555;font-family:'Liberation Sans',sans-serif;transform:scaleX(0.9489);">5</span>
<div class="a" style="left:39px;top:243px;width:202px;height:153px;background:#d9d9d9;"></div>
<svg style="left:40px;top:244px;overflow:hidden" width="200" height="150" viewBox="0 0 200 150"><rect width="200" height="150" fill="url(#tbg)"/><rect width="200" height="19" fill="#f8fbdc"/><path d="M200 72 C188 100 150 128 100 140 C70 146 40 148 12 150 L200 150Z" fill="#3db150"/><path d="M2 20.500H198" stroke="#1a1a1a" stroke-width="1.200"/><text x="103" y="15" font-family="Liberation Sans" font-size="6.5" fill="#222" text-anchor="middle">Introduction</text><g><path d="M175 118h14v17q0 4-7 7-7-3-7-7z" fill="#8f9689" stroke="#4d6a3e" stroke-width=".6"/><path d="M177 120q5-2 10 1 1 7-3 11-5 0-7-6z" fill="#dc2a25"/><path d="M182 139l-6-4 6-4 6 4z" fill="#f1d93b"/><path d="M169 142q13 8 26 0l1 3q-14 8-28 0z" fill="#f0d63a"/><path d="M176 143h12v5h-12z" fill="#c8443a"/><path d="M170 138q-3-3-2-7M194 138q3-3 2-7" stroke="#2c7a2e" fill="none"/></g><g stroke="#bfe8c0" stroke-width=".8"><path d="M148 142h22M142 145.500h30M146 148.500h24"/></g><path d="M16 31.3l5 2.100-5 2.100 1.400-2.100z" fill="#111"/><text x="22" y="35.5" font-family="Liberation Sans" font-size="5.4" fill="#333" textLength="79.0" lengthAdjust="spacingAndGlyphs">This is a two part-lecture:</text><text x="35" y="47" font-family="Liberation Sans" font-size="5.4" fill="#333" textLength="143.0" lengthAdjust="spacingAndGlyphs">1. Kenya's history up to independence in 1963</text><text x="35" y="57.5" font-family="Liberation Sans" font-size="5.4" fill="#333" textLength="116.0" lengthAdjust="spacingAndGlyphs">2. Kenya's post-independence history</text><path d="M16 76.3l5 2.100-5 2.100 1.400-2.100z" fill="#111"/><text x="22" y="80.5" font-family="Liberation Sans" font-size="5.4" fill="#333" textLength="156.0" lengthAdjust="spacingAndGlyphs">Objective of the lecture is to contextualise Kenyan</text><text x="22" y="89.5" font-family="Liberation Sans" font-size="5.4" fill="#333" textLength="136.0" lengthAdjust="spacingAndGlyphs">culture, ethnicity, the impact of colonialism,</text><text x="22" y="98.5" font-family="Liberation Sans" font-size="5.4" fill="#333" textLength="151.0" lengthAdjust="spacingAndGlyphs">modernisation, national identity/nation-building</text><path d="M16 115.8l5 2.100-5 2.100 1.400-2.100z" fill="#111"/><text x="22" y="120" font-family="Liberation Sans" font-size="5.4" fill="#333" textLength="99.0" lengthAdjust="spacingAndGlyphs">These issues have a long history</text></svg>
<div class="a" style="left:39px;top:417px;width:202px;height:153px;background:#d9d9d9;"></div>
<svg style="left:40px;top:418px;overflow:hidden" width="200" height="150" viewBox="0 0 200 150"><rect width="200" height="150" fill="url(#tbg)"/><rect width="200" height="19" fill="#f8fbdc"/><path d="M200 72 C188 100 150 128 100 140 C70 146 40 148 12 150 L200 150Z" fill="#3db150"/><path d="M2 20.500H198" stroke="#1a1a1a" stroke-width="1.200"/><text x="103" y="15" font-family="Liberation Sans" font-size="8" fill="#222" text-anchor="middle">Introduction 2</text><g><path d="M175 118h14v17q0 4-7 7-7-3-7-7z" fill="#8f9689" stroke="#4d6a3e" stroke-width=".6"/><path d="M177 120q5-2 10 1 1 7-3 11-5 0-7-6z" fill="#dc2a25"/><path d="M182 139l-6-4 6-4 6 4z" fill="#f1d93b"/><path d="M169 142q13 8 26 0l1 3q-14 8-28 0z" fill="#f0d63a"/><path d="M176 143h12v5h-12z" fill="#c8443a"/><path d="M170 138q-3-3-2-7M194 138q3-3 2-7" stroke="#2c7a2e" fill="none"/></g><g stroke="#bfe8c0" stroke-width=".8"><path d="M148 142h22M142 145.500h30M146 148.500h24"/></g><path d="M16 30.8l5 2.100-5 2.100 1.400-2.100z" fill="#111"/><text x="22" y="35" font-family="Liberation Sans" font-size="5.4" fill="#333" textLength="161.0" lengthAdjust="spacingAndGlyphs">Kenya's culture is fairly diverse and has its roots in a</text><text x="22" y="44.5" font-family="Liberation Sans" font-size="5.4" fill="#333" textLength="164.0" lengthAdjust="spacingAndGlyphs">long process starting from the evolution of humanity</text><text x="22" y="54" font-family="Liberation Sans" font-size="5.4" fill="#333" textLength="153.0" lengthAdjust="spacingAndGlyphs">and subsequently intermingling of various groups</text><path d="M16 70.8l5 2.100-5 2.100 1.400-2.100z" fill="#111"/><text x="22" y="75" font-family="Liberation Sans" font-size="5.4" fill="#333" textLength="157.0" lengthAdjust="spacingAndGlyphs">'Modernisation' of Kenya is mainly associated with</text><text x="22" y="84.5" font-family="Liberation Sans" font-size="5.4" fill="#333" textLength="140.0" lengthAdjust="spacingAndGlyphs">British imperialism from the late 19th century</text><path d="M16 102.3l5 2.100-5 2.100 1.400-2.100z" fill="#111"/><text x="22" y="106.5" font-family="Liberation Sans" font-size="5.4" fill="#333" textLength="166.0" lengthAdjust="spacingAndGlyphs">Nation-building/creation of a national identity mainly</text><text x="22" y="116" font-family="Liberation Sans" font-size="5.4" fill="#333" textLength="162.0" lengthAdjust="spacingAndGlyphs">started at Independence in 1963 and is a work in</text><text x="22" y="125.5" font-family="Liberation Sans" font-size="5.4" fill="#333" textLength="27.0" lengthAdjust="spacingAndGlyphs">progress</text><path d="M175 118h14v17q0 4-7 7-7-3-7-7z" fill="#8f9689" stroke="#4d6a3e" stroke-width=".6"/><path d="M177 120q5-2 10 1 1 7-3 11-5 0-7-6z" fill="#dc2a25"/><path d="M182 139l-6-4 6-4 6 4z" fill="#f1d93b"/></svg>
<div class="a" style="left:37px;top:589px;width:206px;height:157px;background:#e36f4d;"></div>
<div class="a" style="left:39.5px;top:591.5px;width:201.0px;height:152.0px;background:#f3cfc0;"></div>
<svg style="left:40px;top:592px;overflow:hidden" width="200" height="150" viewBox="527 237 799 600"><use href="#s4"/></svg>
<div class="a" style="left:39px;top:765px;width:202px;height:93px;background:#d9d9d9;"></div>
<svg style="left:40px;top:766px;overflow:hidden" width="200" height="92" viewBox="0 0 200 92"><rect width="200" height="150" fill="url(#tbg)"/><rect width="200" height="21" fill="#f8fbdc"/><path d="M200 70 C194 84 186 96 176 106 L200 120Z" fill="#3db150"/><rect x="1.800" y="21.200" width="5" height="1.800" fill="#111"/><rect x="95" y="21.200" width="103.600" height="1.800" fill="#111"/><text x="15.700" y="14.900" font-family="Liberation Sans" font-size="6.400" font-weight="bold" fill="#111" textLength="74.200" lengthAdjust="spacingAndGlyphs">Kenya: Ecological Zones</text><rect x="12.900" y="23.900" width="80" height="80" fill="#f8ece5"/><path d="M13 24.500h80" stroke="#d9c9c2" stroke-width="1.200"/><path d="M13 42L29 27.400l5.500 10.400 18.100 6.200 13.900 5.600 6.900-5.600h18.800l-9.700 11.200V96" fill="none" stroke="#8f847e" stroke-width=".9"/><path d="M13 42l11.800 18.800-2.800 11.100L13 83M34.500 37.800q-2 14 4 24t2 30M24.800 60.800q8 6 6 16t4 16M40 62q8 10 20 12M22 72q-6 10-2 20" fill="none" stroke="#8a7e78" stroke-width=".8"/><path d="M31 62q3 8 1 18M36 66q2 8-1 14" stroke="#7a6e68" stroke-width="1.100" fill="none"/><g fill="#9a8e88"><circle cx="27" cy="51" r="1.200"/><circle cx="58.500" cy="57.500" r="1.200"/><circle cx="42" cy="86" r="1.200"/></g><path d="M103 24.0l3.600 1.600-3.600 1.600z" fill="#111"/><text x="111.7" y="27.4" font-family="Liberation Serif" font-size="5" fill="#5c5c5c" textLength="75.1" lengthAdjust="spacingAndGlyphs">Kenya has a various ecological</text><text x="111.7" y="33.6" font-family="Liberation Serif" font-size="5" fill="#5c5c5c" textLength="75.1" lengthAdjust="spacingAndGlyphs">zones: coastal plain, arid low</text><text x="111.7" y="40.6" font-family="Liberation Serif" font-size="5" fill="#5c5c5c" textLength="75.1" lengthAdjust="spacingAndGlyphs">plateaus, the Kenya highlands,</text><text x="111.7" y="46.9" font-family="Liberation Serif" font-size="5" fill="#5c5c5c" textLength="59.3" lengthAdjust="spacingAndGlyphs">and Lake Victoria low land</text><path d="M103 56.0l3.600 1.600-3.600 1.600z" fill="#111"/><text x="111.7" y="59.4" font-family="Liberation Serif" font-size="5" fill="#5c5c5c" textLength="75.1" lengthAdjust="spacingAndGlyphs">The land rises from sea level in</text><text x="111.7" y="66.3" font-family="Liberation Serif" font-size="5" fill="#5c5c5c" textLength="75.1" lengthAdjust="spacingAndGlyphs">the south-east to about 5,200</text><text x="111.7" y="71.9" font-family="Liberation Serif" font-size="5" fill="#5c5c5c" textLength="75.1" lengthAdjust="spacingAndGlyphs">metres at the top of Mt Kenya in</text><text x="111.7" y="78.8" font-family="Liberation Serif" font-size="5" fill="#5c5c5c" textLength="75.1" lengthAdjust="spacingAndGlyphs">the centre before sloping</text><text x="111.7" y="85.8" font-family="Liberation Serif" font-size="5" fill="#5c5c5c" textLength="75.1" lengthAdjust="spacingAndGlyphs">gradually to the Lake Victoria</text><text x="111.7" y="91.4" font-family="Liberation Serif" font-size="5" fill="#5c5c5c" textLength="36.3" lengthAdjust="spacingAndGlyphs">basin in the west</text></svg>
<div class="a" style="left:526px;top:236px;width:801px;height:602px;background:#f1f1ec;"></div>
<svg style="left:527px;top:237px;overflow:hidden" width="799" height="600" viewBox="527 237 799 600"><defs>
<linearGradient id="bgg" x1="0" y1="0" x2="0" y2="1"><stop offset="0" stop-color="#f8fbdc"/><stop offset=".3" stop-color="#f5f9e1"/><stop offset="1" stop-color="#eef2e4"/></linearGradient>
<linearGradient id="grn" x1="0" y1="0" x2="1" y2="0"><stop offset="0" stop-color="#43b455"/><stop offset="1" stop-color="#38ad4c"/></linearGradient>
<linearGradient id="lfe" x1="0" y1="0" x2="1" y2="0"><stop offset="0" stop-color="#eef6d6"/><stop offset=".45" stop-color="#f3f9e2"/><stop offset="1" stop-color="#fdfdfc" stop-opacity="0"/></linearGradient>
<linearGradient id="tfe" x1="0" y1="0" x2="0" y2="1"><stop offset="0" stop-color="#f8fbdc"/><stop offset="1" stop-color="#fdfdfc" stop-opacity="0"/></linearGradient>
<linearGradient id="ltint" x1="0" y1="0" x2="0" y2="1"><stop offset="0" stop-color="#dcefc8" stop-opacity="0"/><stop offset="1" stop-color="#d3ebc2" stop-opacity=".85"/></linearGradient>
<pattern id="hatch" width="2.600" height="2.600" patternUnits="userSpaceOnUse" patternTransform="rotate(-45)"><rect width="2.600" height="2.600" fill="#f4f4f4"/><path d="M0 1.300h2.600" stroke="#666" stroke-width=".9"/></pattern>
<pattern id="dots" width="3" height="3" patternUnits="userSpaceOnUse"><rect width="3" height="3" fill="#f3f3f3"/><circle cx="1" cy="1" r=".5" fill="#999"/></pattern>
<pattern id="dots2" width="5" height="5" patternUnits="userSpaceOnUse"><rect width="5" height="5" fill="#f7f7f6"/><circle cx="1.500" cy="1.500" r=".5" fill="#aaa"/></pattern>
<filter id="csh" x="-20%" y="-20%" width="140%" height="140%"><feDropShadow dx="3.500" dy="3.500" stdDeviation="2.600" flood-color="#0a3512" flood-opacity=".6"/></filter>
</defs><g id="s4"><rect x="527" y="237" width="799" height="600" fill="url(#bgg)"/>
<rect x="527" y="237" width="799" height="81" fill="#f8fbdc"/>
<path d="M1326.0 521.0 C1323.0 527.5 1314.6 546.8 1308.0 560.0 C1301.4 573.2 1295.6 585.8 1286.3 600.0 C1277.0 614.2 1263.8 633.0 1252.0 645.5 C1240.2 658.0 1228.7 664.4 1215.8 675.0 C1202.9 685.6 1189.3 698.8 1174.8 709.0 C1160.3 719.2 1145.3 728.1 1129.0 736.5 C1112.7 744.9 1095.9 752.5 1077.0 759.3 C1058.1 766.1 1032.6 773.0 1015.5 777.5 C998.4 782.0 993.8 782.7 974.5 786.6 C955.2 790.5 929.1 796.3 900.0 801.0 C870.9 805.7 830.5 811.3 800.0 815.0 C769.5 818.7 746.8 820.4 716.8 823.2 C686.8 826.0 649.5 829.5 620.0 832.0 C590.5 834.5 553.3 837.0 540.0 838.0 L527 838 L527 840 L1326 840 Z" fill="url(#grn)"/>
<path d="M1326.0 521.0 C1323.0 527.5 1314.6 546.8 1308.0 560.0 C1301.4 573.2 1295.6 585.8 1286.3 600.0 C1277.0 614.2 1263.8 633.0 1252.0 645.5 C1240.2 658.0 1228.7 664.4 1215.8 675.0 C1202.9 685.6 1189.3 698.8 1174.8 709.0 C1160.3 719.2 1145.3 728.1 1129.0 736.5 C1112.7 744.9 1095.9 752.5 1077.0 759.3 C1058.1 766.1 1032.6 773.0 1015.5 777.5 C998.4 782.0 993.8 782.7 974.5 786.6 C955.2 790.5 929.1 796.3 900.0 801.0 C870.9 805.7 830.5 811.3 800.0 815.0 C769.5 818.7 746.8 820.4 716.8 823.2 C686.8 826.0 649.5 829.5 620.0 832.0 C590.5 834.5 553.3 837.0 540.0 838.0" fill="none" stroke="#eaf6e2" stroke-width="2.500" opacity=".55" transform="translate(-1,-1.500)"/>
<rect x="541" y="319" width="432" height="504" fill="#fdfdfc"/>
<rect x="527" y="318" width="27" height="519" fill="url(#lfe)"/>
<rect x="541" y="318" width="432" height="5" fill="url(#tfe)"/>
<rect x="527" y="640" width="16" height="197" fill="url(#ltint)"/>
<g fill="none" stroke="#f0f0f0" stroke-width="1"><path d="M628 330 Q612 500 598 794"/><path d="M678 330 Q664 560 658 794"/><path d="M729 330 Q719 560 716 794"/><path d="M780 330 Q778 560 778 794"/><path d="M830 330 Q834 560 838 794"/><path d="M880 330 Q892 560 900 794"/><path d="M931 330 Q950 560 962 794"/><path d="M562 373 Q760 392 966 368"/><path d="M562 440 Q760 450 966 438"/><path d="M562 504 Q760 510 966 503"/><path d="M562 564 H966"/><path d="M562 629 Q760 627 966 630"/><path d="M562 694 Q760 688 966 693"/><path d="M562 760 Q760 748 966 757"/></g>
<path d="M885.5 459.0 L897.5 474.0 L909.0 485.5 L915.5 494.5 L913.5 500.5 L920.0 503.7 L947.0 497.0 L960.0 493.5 L963.0 499.0 L954.0 522.0 L938.5 546.5 L925.0 557.0 L911.0 573.0 L906.9 572.8 L904.2 556.1 L905.6 543.6 L894.4 546.4 L877.8 539.4 L872.5 537.7 L867.9 533.2 L856.6 519.6 L863.4 512.8 L865.7 499.2 L874.7 483.3 L877.0 467.4Z" fill="url(#dots2)"/>
<path d="M844.4 583.9 L851.4 582.5 L861.1 579.7 L863.9 575.6 L879.0 585.0 L891.7 595.0 L891.7 606.0 L894.5 623.0 L898.6 637.0 L884.0 638.0 L866.7 639.4 L864.0 632.0 L861.1 625.6 L852.0 621.0 L844.4 617.2 L841.0 610.0 L838.9 603.3 L841.0 593.0Z" fill="url(#dots)"/>
<path d="M844.4 547.8 L854.0 545.5 L863.9 543.6 L866.7 553.3 L865.0 561.0 L862.5 567.2 L856.0 568.0 L850.0 568.6 L845.5 567.0 L841.7 564.4 L842.0 556.0Z" fill="url(#dots)"/>
<path d="M863.9 540.8 L870.0 540.0 L877.8 539.4 L886.0 543.0 L894.4 546.4 L900.0 545.0 L905.6 543.6 L904.5 550.0 L904.2 556.1 L905.5 565.0 L906.9 572.8 L901.0 584.0 L894.4 595.0 L879.0 585.0 L863.9 575.6 L866.0 565.0 L866.7 553.3Z" fill="url(#hatch)" stroke="#666" stroke-width=".7"/>
<path d="M857.7 627.0 L861.7 627.0 L865.5 656.0 L861.5 656.0Z" fill="#999" opacity=".8"/>
<path d="M851.4 570.0 L857.0 570.5 L862.5 571.4 L862.5 576.0 L861.1 579.7 L856.0 581.5 L851.4 582.5 L850.0 576.0Z" fill="#fdfdfc" stroke="#888" stroke-width=".7"/>
<g fill="none" stroke="#8f8f8f" stroke-width=".8" stroke-dasharray="2.500 1.200">
<path d="M868.0 426.6 L864.5 431.0 L861.0 434.5 L855.7 434.1 L850.7 433.9 L845.4 434.1 L839.8 434.1 L834.6 433.9 L829.5 433.5 L824.5 434.0 L819.1 433.4 L814.3 433.9 L809.0 433.4 L809.1 439.6 L809.0 446.0 L803.3 447.0 L803.7 451.6 L803.6 456.8 L803.0 461.7 L803.1 467.3 L803.3 472.0 L796.5 474.2 L794.0 481.0 L792.0 487.8 L795.0 494.0 L798.8 499.2 L800.5 506.0 L802.2 512.8 L809.0 520.0 L815.8 526.4 L820.0 533.0 L824.8 539.0 L829.6 540.6 L835.0 542.0 L840.3 543.1 L845.3 544.5 L854.0 543.0 L863.4 541.0 L872.5 537.7"/>
<path d="M885.5 459.0 L881.0 463.0 L877.0 467.4 L875.5 476.0 L874.7 483.3 L870.0 491.0 L865.7 499.2 L864.5 506.0 L863.4 512.8 L860.0 516.0 L856.6 519.6 L862.0 526.5 L867.9 533.2 L872.5 537.7"/>
<path d="M913.3 500.3 L917.5 505.0 L922.4 510.5 L927.6 512.5 L933.0 515.0 L938.6 517.0 L943.9 519.6 L938.0 527.0 L934.7 531.1 L931.4 535.5 L925.3 537.5 L920.0 539.5 L914.0 541.4 L908.8 543.4 L899.7 541.1 L893.5 540.5 L888.0 540.5 L882.4 540.5 L877.0 540.0 L872.5 537.7"/>
</g>
<g fill="none" stroke="#8f8f8f" stroke-width=".8">
<path d="M736.1 601.9 L738.9 596.4 L748.0 593.0 L753.1 591.2 L758.3 589.4 L760.5 584.6 L762.1 579.9 L764.0 575.0 L766.4 568.4 L769.4 561.7 L770.6 556.6 L771.5 551.0 L772.2 545.7 L773.6 540.8 L782.0 540.0 L791.7 539.4 L801.0 537.0 L805.7 536.4 L811.1 535.3 L818.0 538.0 L825.0 540.8 L830.2 542.0 L835.0 544.0 L844.4 546.4"/>
<path d="M736.1 601.9 L741.5 602.3 L747.0 602.5 L752.8 602.6 L758.3 603.3 L760.5 609.0 L762.5 614.4 L771.0 613.0 L780.6 611.7 L788.9 614.4 L790.5 624.0 L791.7 633.9 L797.6 634.5 L804.2 635.3"/>
<path d="M804.2 635.3 L798.0 643.0 L791.7 650.6 L792.3 659.0 L793.1 667.2 L799.0 672.0 L805.6 675.6 L814.0 675.5 L822.2 674.2 L828.0 669.5 L833.3 664.4 L839.0 661.0 L844.4 657.5 L849.5 654.0 L854.2 650.6 L855.0 641.0 L855.6 631.1 L850.0 626.0 L844.4 621.4 L839.0 622.5 L833.3 624.2 L831.5 630.0 L830.6 636.7 L833.0 642.5 L836.1 647.8 L829.0 645.0 L822.2 642.2 L813.0 639.0 L804.2 635.3"/>
<path d="M850.0 726.9 L846.5 719.0 L844.4 711.7 L845.6 707.0 L847.5 702.0 L849.6 697.5 L851.4 692.2 L852.0 686.4 L853.0 681.0 L853.8 675.6 L854.2 670.0 L848.0 667.0 L841.7 664.4"/>
<path d="M854.2 650.6 L858.0 657.0 L863.0 661.0 L867.0 668.0 L866.0 676.0 L865.2 680.5 L863.9 685.6 L862.5 690.8"/>
<path d="M866.7 639.4 L872.4 638.9 L878.2 638.4 L884.0 638.0 L891.2 637.6 L898.6 637.0"/>
<path d="M844.4 546.4 L842.0 556.0 L841.7 564.4 L843.0 574.0 L844.4 583.9 L841.0 593.0 L840.0 598.4 L838.9 603.3 L841.0 610.0 L844.4 617.2 L844.4 621.4"/>
<path d="M844.4 547.8 L854.0 545.5 L858.7 544.7 L863.9 543.6 L865.2 548.2 L866.7 553.3 L865.0 561.0 L862.5 567.2 L856.0 568.0 L850.0 568.6 L845.5 567.0 L841.7 564.4 L842.0 556.0"/>
<path d="M844.4 583.9 L851.4 582.5 L856.4 581.3 L861.1 579.7 L863.9 575.6 L868.9 578.7 L873.9 582.3 L879.0 585.0 L883.1 588.1 L887.3 591.5 L891.7 595.0 L891.6 600.3 L891.7 606.0 L892.3 611.5 L893.4 617.4 L894.5 623.0 L896.3 629.7 L898.6 637.0 L891.1 637.5 L884.0 638.0 L878.1 638.7 L872.7 638.9 L866.7 639.4 L864.0 632.0 L861.1 625.6 L856.2 623.5 L852.0 621.0 L844.4 617.2 L841.0 610.0 L838.9 603.3 L840.2 598.1 L841.0 593.0"/>
</g>
<path d="M845 566q-2 8-1 16t-1 14q0 10 4 18 4 6 8 10" fill="none" stroke="#9a9a9a" stroke-width="1.800" stroke-dasharray="1.500 1"/>
<path d="M651.0 344.5 L654.5 348.0 L658.0 349.0 L662.0 350.0 L665.9 350.1 L670.0 350.0 L673.6 348.0 L677.0 347.0 L683.0 343.5 L686.5 343.7 L690.7 342.9 L695.0 343.0 L699.2 342.6 L702.7 342.3 L706.0 342.0 L710.5 341.3 L714.8 341.7 L719.0 341.0 L723.4 341.3 L727.9 340.5 L732.0 341.0 L737.5 342.5 L738.0 346.0 L737.3 349.6 L736.0 353.0 L732.0 358.0 L730.0 362.0 L734.0 366.0 L739.0 368.0 L742.8 368.2 L747.0 369.5 L750.9 370.2 L754.0 371.0 L759.0 374.0 L764.0 378.0 L767.7 379.9 L771.0 381.0 L774.7 382.7 L778.0 383.5 L780.0 378.0 L783.0 372.0 L787.0 369.5 L791.0 369.0 L796.0 371.5 L800.0 373.5 L804.4 375.1 L809.0 376.0 L813.4 377.5 L818.0 378.0 L821.9 378.3 L825.0 379.5 L830.5 380.0 L834.0 377.5 L837.5 376.5 L842.0 377.0 L845.5 378.0 L847.0 382.0 L847.5 386.0 L849.3 390.2 L852.0 395.0 L854.8 399.4 L856.5 404.0 L858.5 407.4 L860.2 411.2 L862.0 415.0 L863.8 418.9 L866.1 423.1 L868.0 426.5 L870.7 431.2 L873.0 435.0 L875.4 438.7 L877.2 441.0 L879.0 444.5 L881.4 449.3 L883.0 453.0 L884.9 456.8 L886.0 460.5 L888.7 463.4 L891.0 467.0 L894.6 470.6 L897.5 474.0 L900.0 476.5 L903.0 480.0 L906.4 483.3 L909.0 485.5 L913.0 490.0 L915.5 494.5 L914.0 498.0 L913.5 500.5 L917.0 503.0 L920.0 503.7 L926.0 502.0 L931.5 500.3 L934.8 499.7 L939.0 498.5 L942.9 497.4 L947.0 497.0 L950.3 496.3 L954.0 495.0 L960.0 493.5 L963.0 495.5 L963.0 499.0 L962.4 502.0 L961.0 506.0 L959.9 509.0 L958.5 513.0 L956.5 517.3 L954.0 522.0 L952.2 527.0 L949.5 531.0 L946.8 535.5 L944.0 539.0 L941.0 542.3 L938.5 546.5 L935.9 549.0 L933.0 552.5 L928.7 554.6 L925.0 557.0 L922.8 559.3 L919.8 562.7 L918.0 565.0 L915.5 568.2 L913.8 570.2 L911.0 573.0 L909.0 576.0 L907.2 579.1 L905.0 582.0 L902.6 585.9 L900.0 589.5 L898.0 593.8 L895.0 598.0 L893.3 602.2 L891.7 606.0 L892.1 610.3 L893.0 615.0 L894.3 619.0 L894.5 623.0 L895.8 626.0 L897.0 630.0 L897.7 633.6 L898.6 637.0 L898.5 642.1 L899.5 647.0 L899.2 651.0 L898.6 656.0 L896.0 662.0 L891.7 667.0 L888.5 670.0 L885.0 673.0 L881.7 675.5 L878.0 678.3 L874.2 681.4 L870.0 684.0 L865.7 687.0 L862.5 691.0 L865.5 696.0 L866.7 700.6 L866.5 704.8 L866.0 708.0 L864.0 714.4 L860.2 717.7 L857.0 721.0 L853.6 723.8 L850.0 727.0 L849.0 733.0 L847.2 739.5 L843.0 745.0 L839.0 750.6 L835.4 754.1 L832.0 758.0 L828.4 761.4 L825.0 764.5 L821.3 766.6 L818.0 769.0 L814.8 770.4 L811.0 772.8 L807.1 773.2 L803.0 773.0 L798.5 773.3 L794.5 774.2 L791.1 774.8 L787.0 776.0 L780.6 778.3 L776.0 778.0 L772.2 775.6 L770.5 771.2 L769.5 767.0 L768.3 762.6 L766.7 759.0 L765.1 755.2 L764.3 751.6 L762.5 748.0 L761.5 743.9 L759.5 740.6 L758.3 736.7 L757.6 732.7 L755.8 728.5 L755.0 725.0 L753.8 721.1 L752.9 718.3 L751.4 714.4 L749.9 710.7 L749.5 707.6 L748.0 704.0 L746.5 699.3 L744.4 695.0 L742.5 691.4 L741.8 688.1 L740.0 685.0 L737.9 680.2 L736.1 675.6 L735.2 670.7 L734.5 666.0 L735.1 660.6 L734.7 656.0 L735.8 652.5 L738.0 648.0 L740.3 644.2 L741.7 639.4 L741.9 635.7 L742.3 631.0 L742.5 626.6 L741.7 622.8 L741.2 619.6 L740.4 615.6 L739.5 612.0 L738.1 608.5 L736.9 604.9 L736.1 602.0 L733.6 597.8 L731.0 594.0 L728.3 589.8 L725.0 586.7 L722.9 583.6 L720.0 580.0 L718.1 577.5 L715.3 574.2 L717.5 568.0 L719.6 564.9 L720.8 561.7 L720.4 557.6 L721.0 553.0 L719.8 548.8 L719.4 545.0 L716.0 540.5 L711.0 538.1 L705.6 537.8 L701.0 540.0 L697.8 541.1 L695.0 536.0 L692.2 531.1 L688.0 529.0 L683.3 527.8 L679.8 527.9 L676.0 528.0 L670.0 529.0 L666.4 531.0 L663.0 532.0 L656.7 534.4 L650.0 534.6 L643.3 534.4 L639.3 534.7 L635.0 535.4 L631.1 536.4 L627.8 536.7 L622.0 538.8 L616.7 540.0 L611.0 537.0 L605.6 533.3 L602.8 531.5 L600.0 529.0 L597.0 526.4 L594.4 524.4 L590.0 520.0 L586.7 515.6 L586.0 511.0 L584.4 506.7 L581.5 502.0 L578.9 497.8 L575.0 493.0 L572.2 489.0 L570.0 484.0 L568.9 480.0 L566.0 476.0 L565.6 471.0 L567.1 467.3 L568.5 463.0 L570.0 459.6 L572.2 455.6 L573.3 451.6 L573.4 447.0 L573.7 442.0 L573.3 438.0 L572.0 433.0 L572.2 429.0 L575.0 423.0 L578.9 417.8 L582.1 414.3 L585.0 410.0 L586.9 407.1 L589.5 404.8 L592.2 402.2 L594.5 399.1 L597.0 396.0 L600.5 392.5 L603.3 390.0 L606.2 387.6 L610.0 386.0 L612.9 383.6 L616.7 382.2 L620.0 379.0 L622.2 375.6 L624.5 369.0 L627.8 363.3 L633.0 359.0 L638.9 355.6 L643.0 351.5 L647.8 347.8Z" fill="none" stroke="#7d7d7d" stroke-width="1" stroke-linejoin="round"/>
<path d="M948.6 646.4 L951.0 651.0 L952.8 656.0 L952.5 661.2 L952.0 666.0 L951.3 671.2 L950.0 675.6 L948.2 680.2 L946.0 684.0 L943.4 688.1 L941.7 692.2 L940.7 695.9 L939.3 699.0 L937.5 703.0 L936.1 706.5 L934.7 710.7 L933.3 714.4 L930.2 717.9 L928.0 722.0 L924.9 725.6 L922.2 728.3 L918.0 729.0 L913.9 727.0 L911.0 721.0 L909.7 714.4 L910.4 709.9 L910.5 706.0 L911.8 701.5 L912.5 697.8 L913.6 692.5 L914.5 688.0 L915.1 683.5 L916.7 678.3 L919.0 673.5 L922.2 670.0 L925.3 667.5 L929.0 665.5 L933.0 664.0 L936.1 661.7 L940.0 657.0 L943.1 652.0 L946.0 648.0Z" fill="none" stroke="#7d7d7d" stroke-width="1" stroke-linejoin="round"/>
<path d="M566 470l2 4-1 4 3 3-2 4 3 4" fill="none" stroke="#777" stroke-width="1.600"/>
<rect x="560.500" y="327.500" width="408" height="468" fill="none" stroke="#9b9b9b" stroke-width="2"/>
<rect x="562.500" y="329.500" width="404" height="464" fill="none" stroke="#dcdcdc" stroke-width="1"/>
<g font-family="Liberation Sans" font-size="5.500" fill="#8a8a8a" text-anchor="middle" font-style="italic"><text x="631" y="338">10°</text><text x="682" y="338">0°</text><text x="732.7" y="338">10°</text><text x="780.6" y="338">20°</text><text x="830.5" y="338">30°</text><text x="880.4" y="338">40°</text><text x="931.4" y="338">50°</text><text x="727.8" y="790">10°</text><text x="779" y="790">20°</text><text x="829" y="790">30°</text><text x="879" y="790">40°</text><text x="932" y="790">50°</text><text x="568" y="372">30°</text><text x="568" y="438.5">20°</text><text x="568" y="501.5">10°</text><text x="568" y="565">0°</text><text x="568" y="631">10°</text><text x="960" y="372.5">30°</text><text x="960" y="441.5">20°</text><text x="960" y="565">0°</text><text x="960" y="631">10°</text><text x="960" y="694">20°</text><text x="960" y="757.5">30°</text></g>
<g font-family="Liberation Sans" font-size="5.500" fill="#777"><text x="829" y="484" textLength="20" lengthAdjust="spacingAndGlyphs">Sudan</text><text x="882" y="516" textLength="26" lengthAdjust="spacingAndGlyphs">Ethiopia</text><text x="914" y="544" textLength="25" lengthAdjust="spacingAndGlyphs">Somalia</text><text x="804" y="579" textLength="24" lengthAdjust="spacingAndGlyphs">Rwanda</text><text x="803" y="590" textLength="25" lengthAdjust="spacingAndGlyphs">Burundi</text><text x="811" y="656.5" textLength="22" lengthAdjust="spacingAndGlyphs">Zambia</text><text x="904" y="690" textLength="38" lengthAdjust="spacingAndGlyphs">Madagascar</text></g>
<text font-family="Liberation Sans" font-size="5.500" fill="#777" transform="translate(858,706) rotate(-50)" textLength="36" lengthAdjust="spacingAndGlyphs">Mozambique</text>
<text font-family="Liberation Sans" font-size="4.500" fill="#666" transform="translate(863.500,655) rotate(-88)" textLength="22" lengthAdjust="spacingAndGlyphs">Malawi</text>
<path d="M828 577h6M828 588h6" stroke="#aaa" stroke-width=".6"/>
<rect x="566.300" y="709.7" width="22.800" height="14.750" fill="url(#hatch)" stroke="#9a9a9a" stroke-width=".9"/>
<rect x="566.300" y="724.5" width="22.800" height="14.750" fill="#fdfdfc" stroke="#9a9a9a" stroke-width=".9"/>
<rect x="566.300" y="739.2" width="22.800" height="14.750" fill="#fdfdfc" stroke="#9a9a9a" stroke-width=".9"/>
<rect x="566.300" y="754.0" width="22.800" height="14.750" fill="#fdfdfc" stroke="#9a9a9a" stroke-width=".9"/>
<rect x="566.300" y="768.7" width="22.800" height="14.750" fill="#fdfdfc" stroke="#9a9a9a" stroke-width=".9"/>
<g font-family="Liberation Sans" font-size="5.800" fill="#555"><text x="592.900" y="719" textLength="17.8" lengthAdjust="spacingAndGlyphs">Kenya</text><text x="592.900" y="733.8" textLength="77.3" lengthAdjust="spacingAndGlyphs">E.A. Community members</text><text x="592.900" y="748.7" textLength="92.5" lengthAdjust="spacingAndGlyphs">Potential Community members</text><text x="592.900" y="763.7" textLength="108.0" lengthAdjust="spacingAndGlyphs">The outer non-community members</text><text x="592.900" y="779" textLength="59.6" lengthAdjust="spacingAndGlyphs">Other African states</text></g>
<text x="559.400" y="810.500" font-family="Liberation Sans" font-size="5.800" fill="#444" textLength="109" lengthAdjust="spacingAndGlyphs">Fig. 1.1  Location of Kenya in Africa</text>
<rect x="527" y="320" width="14" height="5" fill="#000"/><rect x="973" y="320" width="353" height="5" fill="#000"/>
<text x="582.0" y="292.0" font-family="Liberation Sans" font-size="18.7" fill="#111" textLength="177.0" lengthAdjust="spacingAndGlyphs" font-weight="bold">KENYA: FACT SHEET</text>
<g filter="url(#csh)">
<g fill="none" stroke="#2f9a3c" stroke-width="2.600" stroke-linecap="round"><path d="M1238 777q-14-10-18-8M1238 780q-16-4-24 4M1240 783q-12 2-20 10M1284 777q14-10 18-8M1284 780q16-4 24 4M1282 783q12 2 20 10M1232 770q-6-8-12-10M1290 770q6-8 12-10"/></g>
<g fill="none" stroke="#a6e0a0" stroke-width="1" opacity=".85" stroke-linecap="round"><path d="M1237 778.500q-12-7-17-6M1285 778.500q12-7 17-6M1239 784q-10 2-17 9M1283 784q10 2 17 9"/></g>
<g fill="#4a3a2c"><ellipse cx="1222" cy="757" rx="3.200" ry="7.500" transform="rotate(-50 1222 757)"/><ellipse cx="1298" cy="756" rx="3.200" ry="7.500" transform="rotate(50 1298 756)"/></g>
<path d="M1230.500 695h61v56q0 14-31 25-30-11-30-25z" fill="#939b8e" fill-opacity=".94" stroke="#3f6a36" stroke-width="1.800"/>
<path d="M1235 774l25 5 24-5v21l-24 4-25-4z" fill="#d7382f"/><path d="M1239.500 773l20.500 5 20-5v18l-20 4-20.500-4z" fill="#a9b1a2"/><path d="M1260 776v22" stroke="#2a2a2a" stroke-width="1.400"/><path d="M1255 781h10" stroke="#2a2a2a" stroke-width="1"/><path d="M1257 797l3-3.500 3 3.500z" fill="#2a2a2a"/>
<path d="M1232.500 755l6-5 2 2.500 4-5.500 3 3 5.500-5 3 4.500 4-2 2 4.500 5 1.500 1.500 4 7.500 4.500-18.500 12.500z" fill="#f3dc3e" stroke="#8d7a1e" stroke-width=".8"/>
<g stroke="#dd2a24" fill="none" stroke-linecap="round" stroke-linejoin="round"><path d="M1264 717L1257 739" stroke-width="13"/><path d="M1258 712L1240 707" stroke-width="5.500"/><path d="M1257 721L1240 722" stroke-width="5"/><path d="M1240 707l-3-3M1240 707l-4 1M1240 722l-3.500-2M1240 722l-3 3" stroke-width="2.200"/><path d="M1252 738L1241 748" stroke-width="6"/><path d="M1261.500 743L1266.500 756" stroke-width="6.500"/><path d="M1241 748l-4-1M1266.500 756.500l3.500 2" stroke-width="2.600"/><path d="M1269 738q10-3 13-13t-3-24q-3-4-5.500 0" stroke-width="3.200"/></g>
<circle cx="1265" cy="709.500" r="8" fill="#dd2a24"/><path d="M1258 704l-3-3M1271 703l3.500-3.500M1273.500 710l4-.5M1264.500 701.500v-3.500M1272 716l3 2.500" stroke="#dd2a24" stroke-width="2.600" stroke-linecap="round"/>
<path d="M1260 707l2 1.500M1262 712h3" stroke="#6e0e0c" stroke-width="1"/>
<path d="M1237.500 701.500V737" stroke="#2a2a2a" stroke-width="1.400"/><path d="M1233 735.500h9l-4.500 8z" fill="#f3dc3e" stroke="#2a2a2a" stroke-width=".6"/>
<path d="M1233 695q29-12 59 0" fill="none" stroke="#2f8a34" stroke-width="3"/><path d="M1233.500 691q28.500-13 58 0" fill="none" stroke="#e7d245" stroke-width="4.200"/><g fill="#7a6420"><circle cx="1241" cy="688" r=".9"/><circle cx="1248" cy="685.800" r=".9"/><circle cx="1255" cy="684.600" r=".9"/><circle cx="1262.500" cy="684.300" r=".9"/><circle cx="1270" cy="684.600" r=".9"/><circle cx="1277" cy="685.800" r=".9"/><circle cx="1284" cy="688" r=".9"/></g>
<path d="M1203.500 784.500q6-4 12-1.500L1222 786q-5 1-7.500 4.500 22 11 45.500 11.500 24-.5 45-12-2.500-3.500-7-4l6.500-3.500q6-2 12 1.500l-3.500 5 2.500 5.500q-8 0-13.500 3.500-21 11.500-42 11.500-22.500 0-44-11.500-5.500-3.500-13.500-3.500l2.500-5.500z" fill="#f3e596" stroke="#4d3d14" stroke-width="1"/>
<path id="bn" d="M1217.500 794.300q20 10 42.500 10.500 22-.5 42-11" fill="none"/>
<text font-family="Liberation Sans" font-size="6.200" font-weight="bold" fill="#4a2f12"><textPath href="#bn" startOffset="1.500" textLength="84" lengthAdjust="spacingAndGlyphs">EGERTON UNIVERSITY</textPath></text>
</g>
<path d="M1008 343.0l16.500 7.200-16.500 7.200 4.800-7.200z" fill="#1a1a1a"/>
<text x="1025.0" y="357.0" font-family="Liberation Serif" font-size="22.2" fill="#1a1a1a" textLength="278.3" lengthAdjust="spacingAndGlyphs" >Kenya is one of the 55 states of</text>
<text x="1008.0" y="383.6" font-family="Liberation Serif" font-size="22.2" fill="#1a1a1a" textLength="185.6" lengthAdjust="spacingAndGlyphs" >the African continent</text>
<path d="M1008 423.0l16.500 7.200-16.500 7.200 4.800-7.200z" fill="#1a1a1a"/>
<text x="1025.0" y="437.0" font-family="Liberation Serif" font-size="22.2" fill="#1a1a1a" textLength="263.0" lengthAdjust="spacingAndGlyphs" >Kenya is in East Africa and is</text>
<text x="1008.0" y="463.6" font-family="Liberation Serif" font-size="22.2" fill="#1a1a1a" textLength="285.6" lengthAdjust="spacingAndGlyphs" >bordered by the Indian Ocean in</text>
<text x="1008.0" y="490.3" font-family="Liberation Serif" font-size="22.2" fill="#1a1a1a" textLength="260.6" lengthAdjust="spacingAndGlyphs" >the south-east, Somalia in the</text>
<text x="1008.0" y="517.0" font-family="Liberation Serif" font-size="22.2" fill="#1a1a1a" textLength="289.8" lengthAdjust="spacingAndGlyphs" >east, Ethiopia in the north, South</text>
<text x="1008.0" y="543.6" font-family="Liberation Serif" font-size="22.2" fill="#1a1a1a" textLength="289.8" lengthAdjust="spacingAndGlyphs" >Sudan in the north-west, Uganda</text>
<text x="1008.0" y="570.3" font-family="Liberation Serif" font-size="22.2" fill="#1a1a1a" textLength="278.7" lengthAdjust="spacingAndGlyphs" >in the west, and Tanzania in the</text>
<text x="1008.0" y="597.0" font-family="Liberation Serif" font-size="22.2" fill="#1a1a1a" textLength="46.7" lengthAdjust="spacingAndGlyphs" >south</text>
<path d="M1008 636.3l16.500 7.200-16.500 7.200 4.800-7.200z" fill="#1a1a1a"/>
<text x="1025.0" y="650.3" font-family="Liberation Serif" font-size="22.2" fill="#1a1a1a" textLength="234.0" lengthAdjust="spacingAndGlyphs" >Kenya has a population of</text>
<text x="1008.0" y="677.0" font-family="Liberation Serif" font-size="22.2" fill="#1a1a1a" textLength="208.9" lengthAdjust="spacingAndGlyphs" >about 50 million people</text>
<text x="1008.0" y="703.6" font-family="Liberation Serif" font-size="22.2" fill="#1a1a1a" textLength="279.5" lengthAdjust="spacingAndGlyphs" >belonging to 45 cultural groups</text>
<text x="1008.0" y="730.3" font-family="Liberation Serif" font-size="22.2" fill="#1a1a1a" textLength="139.5" lengthAdjust="spacingAndGlyphs" >of varying sizes</text>
<text x="1058.3" y="786.5" font-family="Liberation Sans" font-size="14.2" fill="#d6f2d0" textLength="135.9" lengthAdjust="spacingAndGlyphs" >EGERTON UNIVERSITY</text>
<text x="1039.4" y="806.6" font-family="Liberation Sans" font-size="9.5" fill="#c6ecc2" textLength="170.6" lengthAdjust="spacingAndGlyphs" font-style="italic">WORLD CLASS UNIVERSITY FOR THE</text>
<text x="1051.5" y="821.4" font-family="Liberation Sans" font-size="9.5" fill="#c6ecc2" textLength="146.8" lengthAdjust="spacingAndGlyphs" font-style="italic">ADVANCEMENT OF HUMANITY</text></g></svg>
<div class="a" style="left:1563px;top:242px;width:18px;height:533px;background:#dddbdc;"></div>
<div class="a" style="left:1563px;top:226px;width:18px;height:16px;background:#fff;border:1px solid #c9c9c9;box-sizing:border-box;"></div>
<div class="a" style="left:1568px;top:231.500px;border-left:4px solid transparent;border-right:4px solid transparent;border-bottom:4px solid #666;"></div>
<div class="a" style="left:1563px;top:272px;width:18px;height:18px;background:#fff;border:1px solid #c0c0c0;box-sizing:border-box;"></div>
<div class="a" style="left:1563px;top:773px;width:18px;height:17px;background:#fff;border:1px solid #c0c0c0;box-sizing:border-box;"></div>
<div class="a" style="left:1568px;top:779px;border-left:4px solid transparent;border-right:4px solid transparent;border-top:4px solid #666;"></div>
<svg style="left:1567px;top:793px" width="9" height="12" viewBox="0 0 9 12"><path d="M4.500 1l4 4h-8zM4.500 6l4 4h-8z" fill="#8a8a8a"/></svg>
<svg style="left:1567px;top:815px" width="9" height="12" viewBox="0 0 9 12"><path d="M4.500 6l4-4h-8zM4.500 11l4-4h-8z" fill="#6a6a6a"/></svg>
<svg style="left:1570px;top:776px" width="14" height="24" viewBox="0 0 14 24"><path d="M1 1v18l4.500-4 3.500 8 3-1.500-3.500-7.500h5.500z" fill="#fff" stroke="#222" stroke-width="1.300"/></svg>
<div class="a" style="left:0px;top:858px;width:1582px;height:1px;background:#dadada;"></div>
<span class="t" style="left:9.6px;top:864.6px;font-size:13px;color:#3b3b3b;font-family:'Liberation Sans',sans-serif;transform:scaleX(0.9934);">Slide 4 of 53</span>
<svg style="left:104px;top:862px" width="19" height="17" viewBox="0 0 19 17"><path d="M1 2.500h6.500v12H1zM7.500 2.500H12v5" fill="none" stroke="#666" stroke-width="1.200"/><path d="M7.500 14.500H12" stroke="#666" stroke-width="1.200"/><path d="M16 3l2 2-6 7-3 1 1-3z" fill="#f3f3f3" stroke="#666" stroke-width="1.100"/></svg>
<span class="t" style="left:140.3px;top:864.6px;font-size:13px;color:#3b3b3b;font-family:'Liberation Sans',sans-serif;transform:scaleX(1.0079);">English (United States)</span>
<svg style="left:1003px;top:864px" width="14" height="14" viewBox="0 0 14 14"><path d="M1 6.500h12M1 9.500h12M1 12.500h9" stroke="#555" stroke-width="1.300"/><path d="M4 4l3-3 3 3z" fill="#555"/></svg>
<span class="t" style="left:1022.0px;top:864.6px;font-size:13px;color:#3b3b3b;font-family:'Liberation Sans',sans-serif;transform:scaleX(1.0306);">Notes</span>
<svg style="left:1080px;top:862px" width="17" height="17" viewBox="0 0 17 17"><path d="M1 1h15v10.500H8l-4 4v-4H1z" fill="#555"/></svg>
<span class="t" style="left:1100.0px;top:864.6px;font-size:13px;color:#3b3b3b;font-family:'Liberation Sans',sans-serif;transform:scaleX(0.9865);">Comments</span>
<svg style="left:1559px;top:863px" width="16" height="16" viewBox="0 0 16 16"><rect x=".6" y=".6" width="14.800" height="14.800" fill="#fff" stroke="#777" stroke-width="1.200"/><path d="M3 3l3.500 3.500M13 3L9.500 6.500M3 13l3.500-3.500M13 13L9.500 9.500" stroke="#555" stroke-width="1.200"/><path d="M3 5.500V3h2.500M10.500 3H13v2.500M3 10.500V13h2.500M13 10.500V13h-2.500" fill="none" stroke="#555" stroke-width="1"/></svg>
<div class="a" style="left:0px;top:884px;width:1582px;height:1px;background:#e9f1e4;"></div>
<div class="a" style="left:57px;top:885.5px;width:331px;height:44.5px;background:#ffffff;border:1px solid #cfd8ca;box-sizing:border-box;"></div>
<svg style="left:18px;top:898px" width="20" height="18" viewBox="0 0 20 18"><path d="M0 2.600l8.200-1.200v7.300H0zM9.300 1.200L20 -.3v9H9.300zM0 9.800h8.200v7.300L0 15.900zM9.300 9.800H20v9l-10.700-1.500z" fill="#111"/></svg>
<svg style="left:69px;top:898px" width="20" height="19" viewBox="0 0 20 19"><circle cx="12.500" cy="7" r="5.800" fill="none" stroke="#333" stroke-width="1.600"/><path d="M8.300 11.300L1 18" stroke="#333" stroke-width="1.800"/></svg>
<span class="t" style="left:102.4px;top:900.2px;font-size:17px;color:#4a4a4a;font-family:'Liberation Sans',sans-serif;transform:scaleX(0.9810);">Type here to search</span>
<svg style="left:406px;top:898px" width="22" height="18" viewBox="0 0 22 18"><rect x="3.500" y="4" width="9.500" height="10" fill="none" stroke="#222" stroke-width="1.600"/><path d="M.5 1.200h15.500M.5 16.800h15.500" stroke="#222" stroke-width="1.600"/><path d="M18.800 5.500v9" stroke="#222" stroke-width="2" stroke-dasharray="3 1.500"/><rect x="17.600" y=".5" width="2.400" height="2.600" fill="#222"/></svg>
<svg style="left:462px;top:893px" width="28" height="28" viewBox="0 0 28 28"><defs><linearGradient id="eg1" x1="0" y1="0" x2="1" y2="1"><stop offset="0" stop-color="#35c1a0"/><stop offset=".5" stop-color="#1b9de2"/><stop offset="1" stop-color="#0c59a4"/></linearGradient></defs><circle cx="14" cy="14" r="13.500" fill="url(#eg1)"/><path d="M3 17q1-12 12-12 9 0 11 8-3-4-8-3-5 1-5 6 0 6 7 8-10 3-15-3-2-2-2-4z" fill="#1566b8"/><path d="M9.500 17q0-6 6-6.500 5 0 5.500 3 0 3-4 3-2.500 0-2.500-1.500-3 2-1 5.500 2 3 6 2.500-8 4-10-6z" fill="#d6e7cf"/><path d="M2 12Q5 1 15 1q9 0 12 9-4-5-12-5-9 0-13 7z" fill="#4cd27a" opacity=".85"/></svg>
<svg style="left:519px;top:895px" width="26" height="23" viewBox="0 0 26 23"><path d="M1 3h9l2 2h13v5H1z" fill="#e8a925"/><path d="M1 7h24v15H1z" fill="#f9d367"/><path d="M5 13h16v9H5z" fill="#3e8ed0"/><path d="M9 17h8v5H9z" fill="#f9d367"/><path d="M3 1.500h7v2H3z" fill="#d89b1c"/></svg>
<div class="a" style="left:510px;top:927.5px;width:46px;height:2.5px;background:#3a3a3a;"></div>
<svg style="left:575px;top:893px" width="28" height="28" viewBox="0 0 28 28"><defs><radialGradient id="ff1" cx=".6" cy=".25" r=".9"><stop offset="0" stop-color="#ffe14a"/><stop offset=".45" stop-color="#ff8a1c"/><stop offset="1" stop-color="#e5264f"/></radialGradient></defs><circle cx="14" cy="15" r="12.500" fill="url(#ff1)"/><path d="M20 2q3 3 2 7 4 2 5 7-3-6-7-4z" fill="#ffb02e"/><circle cx="14.500" cy="14.500" r="6" fill="#7a3ff2"/><path d="M9 12q5-1 7 3t-3 6q6 0 8-6-1-6-7-6-3 0-5 3z" fill="#ff9a2a"/><path d="M3 10q2-4 5-5-1 3 1 5z" fill="#ff7b2a"/></svg>
<svg style="left:632px;top:895px" width="28" height="25" viewBox="0 0 28 25"><rect x="9" y="1" width="18" height="23" fill="#fff" stroke="#2b579a" stroke-width="1.400"/><path d="M17 6h8M17 10h8M17 14h8M17 18h8" stroke="#2b579a" stroke-width="1.500"/><path d="M1 2.500L16 0v25L1 22.500z" fill="#2b579a"/><text x="3.500" y="17" font-family="Liberation Sans" font-weight="bold" font-size="11" fill="#fff">W</text></svg>
<svg style="left:690px;top:893px" width="26" height="28" viewBox="0 0 26 28"><path d="M13 1l8 20H5z" fill="#f58613"/><path d="M10.300 8h5.400l1.800 4.500h-9zM7.300 16h11.400l1.300 3.500H6z" fill="#fff"/><path d="M2 21h22l1.500 6H.5z" fill="#f58613"/><path d="M11.500 1h3l.8 2h-4.600z" fill="#e06a00"/></svg>
<svg style="left:745px;top:893px" width="30" height="28" viewBox="0 0 30 28"><circle cx="18" cy="12" r="10.500" fill="#2e7bd6"/><path d="M12 5q4-3 9-1 2 3 0 6-4 1-6-2-3 0-3-3zM20 13q4-1 7 2-1 5-5 6-3-3-2-8z" fill="#49b24a"/><path d="M9 4q7 0 11 5" fill="none" stroke="#fff" stroke-width=".8" opacity=".6"/><path d="M1 12q8-2 14 4l3-3 1 12-12-1 3-3q-4-5-9-9z" fill="#3ea63c" stroke="#1d6a1d" stroke-width=".8"/><path d="M3 10q7-4 12 1M2 16q5-2 9 2" stroke="#f0c92d" stroke-width="1.600" fill="none"/></svg>
<svg style="left:802px;top:893px" width="28" height="28" viewBox="0 0 28 28"><circle cx="14" cy="14" r="13" fill="#fff"/><path d="M14 14L2.700 7.500A13 13 0 0 1 25.300 7.500z" fill="#e94235"/><path d="M14 14L25.300 7.500A13 13 0 0 1 14 27z" fill="#fbbc05"/><path d="M14 14L14 27A13 13 0 0 1 2.700 7.500z" fill="#34a853"/><path d="M14 8h11.500" stroke="#e94235" stroke-width="1"/><circle cx="14" cy="14" r="6" fill="#fff"/><circle cx="14" cy="14" r="4.700" fill="#4285f4"/></svg>
<div class="a" style="left:793px;top:927.5px;width:46px;height:2.5px;background:#4a4a4a;"></div>
<svg style="left:859px;top:893px" width="29" height="29" viewBox="0 0 29 29"><circle cx="17" cy="11" r="8.500" fill="#fff" stroke="#f08a1a" stroke-width="4"/><path d="M10.500 17.500L3 26" stroke="#e87a10" stroke-width="5" stroke-linecap="round"/></svg>
<div class="a" style="left:902px;top:885px;width:56px;height:45px;background:#eef4ea;"></div>
<svg style="left:916px;top:895px" width="28" height="25" viewBox="0 0 28 25"><rect x="9" y="1" width="18" height="23" fill="#fff" stroke="#d24726" stroke-width="1.400"/><circle cx="19" cy="9" r="4.500" fill="none" stroke="#d24726" stroke-width="1.500"/><path d="M16 17h9M16 20h9" stroke="#d24726" stroke-width="1.500"/><path d="M1 2.500L16 0v25L1 22.500z" fill="#d24726"/><text x="4.500" y="17" font-family="Liberation Sans" font-weight="bold" font-size="12" fill="#fff">P</text></svg>
<div class="a" style="left:902px;top:927.5px;width:56px;height:2.5px;background:#8aa0b8;"></div>
<svg style="left:972px;top:893px" width="28" height="28" viewBox="0 0 28 28"><circle cx="14" cy="14" r="14" fill="#2d6cf6"/><text x="14" y="16.500" text-anchor="middle" font-family="Liberation Sans" font-weight="bold" font-size="7" fill="#cfe0ff">zoom</text></svg>
<div class="a" style="left:963px;top:927.5px;width:46px;height:2.5px;background:#4a4a4a;"></div>
<svg style="left:1154px;top:894px" width="20" height="26" viewBox="0 0 20 26"><rect x="3.500" y="1" width="5" height="17" rx="2.500" fill="#e9f1ff" stroke="#5a8ad8" stroke-width="1.200"/><circle cx="6" cy="20" r="4.500" fill="#e24a4a" stroke="#5a8ad8" stroke-width="1.200"/><path d="M6 8v11" stroke="#e24a4a" stroke-width="2"/><path d="M15 3v17M12 16l3 4 3-4" fill="none" stroke="#2b5fc0" stroke-width="2"/><path d="M10 24h9" stroke="#2b5fc0" stroke-width="2"/></svg>
<svg style="left:1548px;top:897px" width="10" height="22" viewBox="0 0 10 22"><path d="M2 1q7 2 7 10t-7 10" fill="none" stroke="#b7c4b2" stroke-width="1.500"/></svg>
<span class="t" style="left:15.0px;top:1055.2px;font-size:14px;color:#f2f2f2;font-family:'Liberation Sans',sans-serif;transform:scaleX(1.1049);">Reuben M Matheka</span>
<svg style="left:153px;top:1054.5px" width="46" height="15" viewBox="0 0 46 15"><g fill="none" stroke="#f2f2f2" stroke-width="1.150" stroke-linecap="round" stroke-linejoin="round"><path d="M3.500 .8L2.500 3M1 3.500h4.500v9H1zM1 8h4.500M9.300 .8L7.500 4.500h5q0 7.500-1.500 8.300l-1.700-.6M9 7.200l1.200 1.800"/><g transform="translate(15.500,0)"><path d="M2.200 1.500h10v3h-10M2.200 1.500v5q0 5-1.700 6.500M5 6l1 1.500M10.500 6l-1 1.500M4 8h8.500M3.500 10.500h9.500M6.700 8q0 4-2.200 5M9.700 8v5.300"/></g><g transform="translate(31,0)"><path d="M1 2.300h12M4.500 .8v3M9.500 .8v3M4 5h6v3H4zM4 6.500h6M1 9.500h12M7 8.200q-1 2.800-5.500 3.800M7.500 9.800q2 1.800 5 2.200M4.500 11.200h5v2.300M4.500 11.200v2.300M7 10.200v4"/></g></g></svg>
<div class="a" style="left:18px;top:14px;width:73px;height:34px;background:#231a18;border-radius:9px;"></div>
<div class="a" style="left:31.5px;top:26px;width:9.0px;height:9px;background:#ee5a5a;border-radius:50%;"></div>
<span class="t" style="left:46.8px;top:24.0px;font-size:14px;color:#f0f0f0;font-family:'Liberation Sans',sans-serif;transform:scaleX(0.9743);letter-spacing:.3px;">REC</span>
<div class="a" style="left:26px;top:59px;width:85px;height:85px;background:#1878ea;border-radius:50%;"></div>
<svg style="left:48px;top:84px" width="46" height="36" viewBox="0 0 46 36"><path d="M1.500 12.500q0-2 2-2H9L21.500 1.200q1.800-1.200 1.800 1V33.800q0 2.200-1.800 1L9 25.500H3.500q-2 0-2-2z" fill="#fff"/><path d="M28 11.500l15.500 12-8 6V6.500l8 6-15.500 12" fill="none" stroke="#fff" stroke-width="1.800" stroke-linejoin="round"/></svg>
<div class="a" style="left:1185px;top:841px;width:372px;height:209.500px;border-radius:9px;background:#fff;overflow:hidden;box-shadow:0 0 3px rgba(0,0,0,.5);"><svg style="left:1.500px;top:1.500px;border-radius:7.500px;overflow:hidden" width="369" height="206.500" viewBox="1186.500 842.500 369 206.500"><defs><radialGradient id="wall" cx=".25" cy=".1" r="1.050"><stop offset="0" stop-color="#dc472b"/><stop offset=".4" stop-color="#c4331f"/><stop offset=".72" stop-color="#a32819"/><stop offset="1" stop-color="#6a1a0f"/></radialGradient><linearGradient id="wb" x1="0" y1="0" x2="1" y2="0"><stop offset="0" stop-color="#c9d0e6"/><stop offset=".12" stop-color="#e6e9f3"/><stop offset=".5" stop-color="#f3f3f8"/><stop offset="1" stop-color="#ecebee"/></linearGradient><radialGradient id="skin" cx=".47" cy=".16" r=".75"><stop offset="0" stop-color="#98807a"/><stop offset=".3" stop-color="#5a433b"/><stop offset="1" stop-color="#2b1d19"/></radialGradient><filter id="bl"><feGaussianBlur stdDeviation="1.400"/></filter><filter id="bl2" x="-150%" y="-100%" width="400%" height="300%"><feGaussianBlur stdDeviation="9"/></filter></defs><rect x="1186" y="842" width="370" height="208" fill="url(#wall)"/><ellipse cx="1442" cy="872" rx="16" ry="34" fill="#e98a7a" opacity=".5" filter="url(#bl2)"/><g filter="url(#bl)"><path d="M1186 892.500L1421 872.500l12 119v58H1186z" fill="url(#wb)"/><path d="M1186 892.500L1421 872.500l12 119" fill="none" stroke="#cfc9cb" stroke-width="2.500"/><g stroke="#c3c8d8" stroke-width="1.200" fill="none" opacity=".85"><path d="M1240 898h18M1238 908h30M1236 916h40M1240 924h30M1192 915h20M1192 922h14M1232 936h22M1234 946h30M1330 990h8"/></g><path d="M1260 1051l3-4q8-18 21-32 14-8 33-12l37-7 66-5 23 5 47 14q24 9 33 17 8 10 9 24z" fill="#1c191a"/><path d="M1357 1000q-3 26-2 51h66q3-30-1-56z" fill="#0e0d0e"/><path d="M1360 1036q24 8 48 0v6q-24 8-48 0z" fill="#3a3a3c" opacity=".7"/><path d="M1356 978q28 26 60-2l3 22q-32 20-64 2z" fill="#291b17"/><path d="M1385 885C1362 885 1347 902 1345 925 1342 940 1340 950 1344 965 1348 985 1362 1003 1384 1004 1404 1003 1418 985 1422 962 1425 945 1423 930 1420 915 1416 896 1404 885 1385 885Z" fill="url(#skin)"/><ellipse cx="1380" cy="903" rx="19" ry="10" fill="#b09a94" opacity=".5"/><path d="M1352 960q10 30 32 40 22-8 32-40-6 16-32 18-24-2-32-18z" fill="#1f1411" opacity=".6"/><ellipse cx="1342" cy="948" rx="4" ry="10" fill="#35231e"/><path d="M1378 950q6 12 0 22 10 4 18-2" fill="none" stroke="#6a524b" stroke-width="2.500" opacity=".6"/><path d="M1366 988q18 5 34 0" stroke="#150c0a" stroke-width="2.500" fill="none" opacity=".8"/></g><g fill="#2a1d1a" fill-opacity=".18" stroke="#15100f" stroke-width="2" filter="url(#bl)"><rect x="1341.500" y="935.500" width="32" height="18.500" rx="6"/><rect x="1381.500" y="933" width="33" height="19.500" rx="6"/><path d="M1373.500 942q4-3 8-1M1414.500 939l10-4M1341.500 941l-3-1" fill="none"/></g><rect x="1191" y="1019.500" width="151" height="26" rx="4" fill="#2b2b2b" opacity=".82"/></svg></div>
<span class="t" style="left:1200.5px;top:1025.4px;font-size:14.5px;color:#fff;font-family:'Liberation Sans',sans-serif;transform:scaleX(1.0550);">Reuben M Matheka</span>
<div class="a" style="left:1170px;top:826px;width:30px;height:30px;background:#2296f3;border-radius:50%;border:1.500px solid #e8f3ff;box-sizing:border-box;"></div>
<div class="a" style="left:1176.5px;top:840.25px;width:17.0px;height:1.5px;background:#fff;"></div>
<div class="a" style="left:1184.25px;top:832.5px;width:1.5px;height:17.0px;background:#fff;"></div>
<div class="a" style="left:1541.5px;top:826px;width:30.0px;height:30px;background:#2296f3;border-radius:50%;border:1.500px solid #e8f3ff;box-sizing:border-box;"></div>
<div class="a" style="left:1548.0px;top:840.25px;width:17.0px;height:1.5px;background:#fff;"></div>
</body></html>
